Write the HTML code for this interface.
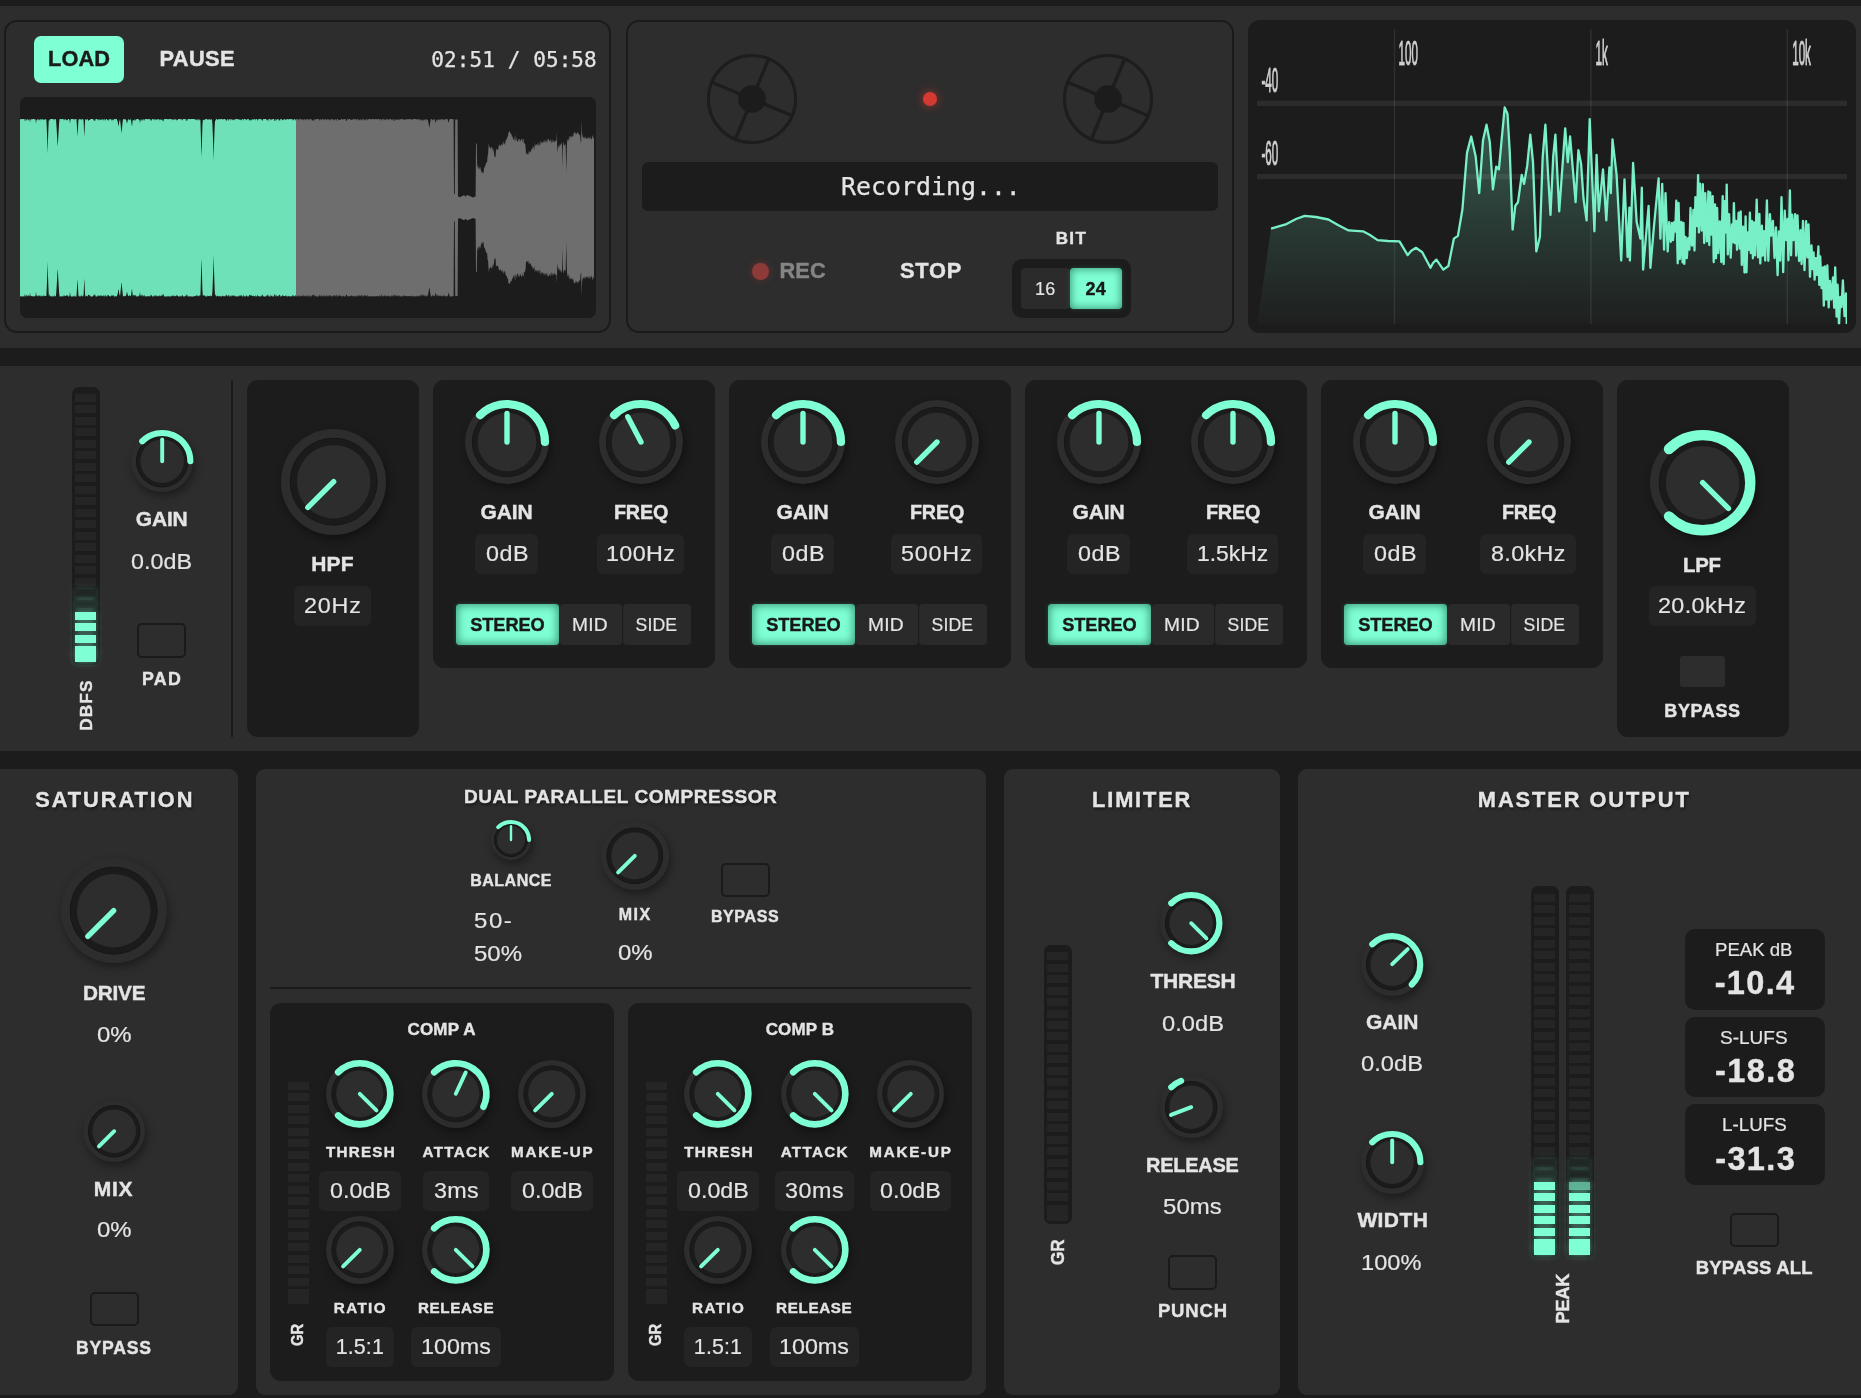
<!DOCTYPE html><html lang="en"><head><meta charset="utf-8"><title>Mastering Chain</title><style>html,body{margin:0;padding:0;background:#1c1c1c;}body{width:1861px;height:1398px;position:relative;overflow:hidden;font-family:"Liberation Sans",sans-serif;}#r div,#r svg{position:absolute;}#r{will-change:transform;position:absolute;left:0;top:0;width:1861px;height:1398px;overflow:hidden;}</style></head><body><div id="r">
<div style="left:0.0px;top:6.0px;width:1861.0px;height:342.0px;background:#2d2d2d;"></div>
<div style="left:0.0px;top:366.0px;width:1861.0px;height:385.0px;background:#2d2d2d;"></div>
<div style="left:4.4px;top:20.2px;width:607.0px;height:313.0px;border-radius:13px;border:2px solid #1b1b1b;box-sizing:border-box;"></div>
<div style="left:626.2px;top:20.2px;width:607.6px;height:313.0px;border-radius:13px;border:2px solid #1b1b1b;box-sizing:border-box;"></div>
<div style="left:34.0px;top:36.0px;width:90.0px;height:47.0px;background:#7fffd4;border-radius:7px;"></div>
<div style="left:48.10px;top:48.10px;font:700 21.8px/21.8px 'Liberation Sans', sans-serif;color:#1a1a1a;letter-spacing:0.025px;white-space:pre;-webkit-text-stroke:0.4px #1a1a1a;">LOAD</div>
<div style="left:159.40px;top:48.10px;font:700 21.8px/21.8px 'Liberation Sans', sans-serif;color:#e4e4e4;letter-spacing:0.425px;white-space:pre;-webkit-text-stroke:0.4px #e4e4e4;">PAUSE</div>
<div style="left:431.23px;top:49.80px;font:400 21px/21px 'DejaVu Sans Mono', 'Liberation Mono', monospace;color:#e4e4e4;letter-spacing:0.098px;white-space:pre;-webkit-text-stroke:.25px #e4e4e4;">02:51 / 05:58</div>
<div style="left:19.8px;top:97.0px;width:576.4px;height:220.5px;background:#1c1c1c;border-radius:7px;"></div>
<svg style="left:0;top:90px" width="620" height="240" viewBox="0 90 620 240"><path d="M20.0 119.0L20.4 118.9L20.8 119.5L21.2 118.9L21.6 119.2L22.0 119.0L22.4 118.9L22.8 119.2L23.2 118.9L23.6 119.1L24.0 118.9L24.4 118.9L24.8 120.9L25.2 120.9L25.6 118.9L26.0 118.9L26.4 119.4L26.8 120.8L27.2 119.3L27.6 119.0L28.0 120.9L28.4 118.9L28.8 120.3L29.2 119.0L29.6 119.5L30.0 122.7L30.4 119.5L30.8 120.1L31.2 118.9L31.6 119.3L32.0 119.5L32.4 119.0L32.8 119.3L33.2 118.9L33.6 118.9L34.0 118.9L34.4 119.6L34.8 119.1L35.2 119.0L35.6 120.2L36.0 123.7L36.4 120.2L36.8 120.0L37.2 119.7L37.6 118.9L38.0 119.3L38.4 119.2L38.8 120.4L39.2 119.8L39.6 119.0L40.0 121.0L40.4 118.9L40.8 119.1L41.2 119.9L41.6 118.9L42.0 119.2L42.4 118.9L42.8 119.6L43.2 119.9L43.6 119.3L44.0 120.4L44.4 119.0L44.8 119.6L45.2 119.4L45.6 119.3L46.0 119.1L46.4 120.2L46.8 128.6L47.2 139.3L47.6 153.8L48.0 139.3L48.4 128.6L48.8 119.5L49.2 121.1L49.6 120.1L50.0 119.0L50.4 119.0L50.8 119.6L51.2 118.9L51.6 119.1L52.0 118.9L52.4 118.9L52.8 118.9L53.2 119.9L53.6 118.9L54.0 118.9L54.4 119.0L54.8 120.4L55.2 118.9L55.6 119.1L56.0 119.3L56.4 124.9L56.8 131.2L57.2 138.2L57.6 146.6L58.0 142.1L58.4 134.6L58.8 128.0L59.2 121.8L59.6 118.9L60.0 118.9L60.4 118.9L60.8 118.9L61.2 119.2L61.6 119.3L62.0 118.9L62.4 118.9L62.8 119.1L63.2 119.0L63.6 119.3L64.0 120.8L64.4 119.6L64.8 119.2L65.2 119.4L65.6 119.6L66.0 118.9L66.4 120.5L66.8 119.9L67.2 120.4L67.6 120.0L68.0 119.0L68.4 119.0L68.8 118.9L69.2 119.5L69.6 120.2L70.0 123.7L70.4 120.2L70.8 118.9L71.2 119.0L71.6 118.9L72.0 118.9L72.4 118.9L72.8 118.9L73.2 119.0L73.6 118.9L74.0 120.4L74.4 119.4L74.8 118.9L75.2 118.9L75.6 119.0L76.0 119.0L76.4 118.9L76.8 124.0L77.2 131.5L77.6 136.1L78.0 127.6L78.4 120.5L78.8 118.9L79.2 119.0L79.6 118.9L80.0 120.2L80.4 118.9L80.8 118.9L81.2 120.8L81.6 119.2L82.0 118.9L82.4 119.3L82.8 118.9L83.2 119.2L83.6 121.1L84.0 130.9L84.4 136.8L84.8 125.8L85.2 119.0L85.6 118.9L86.0 119.9L86.4 119.2L86.8 119.9L87.2 119.0L87.6 118.9L88.0 120.1L88.4 121.0L88.8 120.3L89.2 120.1L89.6 120.1L90.0 119.8L90.4 118.9L90.8 119.2L91.2 119.0L91.6 118.9L92.0 118.9L92.4 118.9L92.8 118.9L93.2 119.6L93.6 120.8L94.0 119.1L94.4 120.7L94.8 121.0L95.2 120.8L95.6 119.0L96.0 118.9L96.4 118.9L96.8 118.9L97.2 118.9L97.6 119.4L98.0 120.5L98.4 120.2L98.8 119.1L99.2 119.5L99.6 120.0L100.0 118.9L100.4 119.5L100.8 120.6L101.2 120.0L101.6 119.8L102.0 119.1L102.4 118.9L102.8 120.0L103.2 119.0L103.6 120.0L104.0 120.9L104.4 119.0L104.8 119.0L105.2 120.8L105.6 119.7L106.0 118.9L106.4 118.9L106.8 118.9L107.2 120.5L107.6 120.1L108.0 118.9L108.4 120.1L108.8 121.0L109.2 119.5L109.6 119.0L110.0 119.3L110.4 118.9L110.8 118.9L111.2 120.9L111.6 119.5L112.0 119.2L112.4 120.7L112.8 119.1L113.2 120.4L113.6 120.1L114.0 118.9L114.4 118.9L114.8 119.0L115.2 118.9L115.6 119.3L116.0 118.9L116.4 119.1L116.8 118.9L117.2 120.6L117.6 120.7L118.0 123.3L118.4 126.5L118.8 124.8L119.2 122.0L119.6 120.6L120.0 119.2L120.4 122.4L120.8 126.2L121.2 130.6L121.6 133.2L122.0 128.3L122.4 124.3L122.8 120.6L123.2 118.9L123.6 119.1L124.0 119.7L124.4 119.3L124.8 119.0L125.2 119.2L125.6 119.3L126.0 120.0L126.4 120.8L126.8 123.1L127.2 123.1L127.6 120.8L128.0 119.9L128.4 119.2L128.8 119.3L129.2 119.9L129.6 120.6L130.0 119.1L130.4 119.4L130.8 119.2L131.2 121.2L131.6 124.5L132.0 126.6L132.4 122.8L132.8 119.6L133.2 120.7L133.6 119.7L134.0 120.4L134.4 120.7L134.8 118.9L135.2 119.3L135.6 120.7L136.0 120.2L136.4 118.9L136.8 118.9L137.2 119.1L137.6 118.9L138.0 118.9L138.4 118.9L138.8 119.6L139.2 120.0L139.6 120.5L140.0 123.7L140.4 120.2L140.8 119.5L141.2 118.9L141.6 120.4L142.0 120.9L142.4 118.9L142.8 120.8L143.2 119.0L143.6 119.2L144.0 121.0L144.4 120.2L144.8 118.9L145.2 119.1L145.6 119.2L146.0 119.0L146.4 118.9L146.8 119.0L147.2 119.7L147.6 118.9L148.0 119.3L148.4 119.1L148.8 118.9L149.2 119.0L149.6 119.4L150.0 119.2L150.4 118.9L150.8 121.0L151.2 120.0L151.6 120.9L152.0 118.9L152.4 118.9L152.8 118.9L153.2 119.9L153.6 118.9L154.0 118.9L154.4 119.1L154.8 120.6L155.2 120.1L155.6 118.9L156.0 118.9L156.4 120.6L156.8 119.3L157.2 119.7L157.6 118.9L158.0 118.9L158.4 119.6L158.8 119.1L159.2 118.9L159.6 120.7L160.0 119.5L160.4 120.0L160.8 118.9L161.2 120.3L161.6 118.9L162.0 120.3L162.4 119.3L162.8 121.3L163.2 121.3L163.6 120.7L164.0 118.9L164.4 118.9L164.8 119.2L165.2 118.9L165.6 118.9L166.0 118.9L166.4 118.9L166.8 118.9L167.2 119.0L167.6 119.0L168.0 119.9L168.4 119.0L168.8 119.2L169.2 118.9L169.6 119.0L170.0 118.9L170.4 118.9L170.8 118.9L171.2 119.8L171.6 119.3L172.0 118.9L172.4 119.1L172.8 120.7L173.2 118.9L173.6 120.1L174.0 119.1L174.4 119.2L174.8 120.2L175.2 119.0L175.6 119.2L176.0 119.6L176.4 121.0L176.8 119.0L177.2 120.2L177.6 119.7L178.0 119.5L178.4 119.0L178.8 119.0L179.2 118.9L179.6 118.9L180.0 118.9L180.4 119.8L180.8 118.9L181.2 118.9L181.6 118.9L182.0 120.2L182.4 120.4L182.8 119.6L183.2 118.9L183.6 118.9L184.0 119.0L184.4 119.1L184.8 118.9L185.2 119.1L185.6 118.9L186.0 120.9L186.4 120.9L186.8 119.3L187.2 118.9L187.6 120.9L188.0 119.0L188.4 119.0L188.8 118.9L189.2 119.0L189.6 119.1L190.0 119.2L190.4 118.9L190.8 119.2L191.2 118.9L191.6 118.9L192.0 118.9L192.4 119.0L192.8 118.9L193.2 118.9L193.6 119.0L194.0 118.9L194.4 119.3L194.8 119.2L195.2 119.8L195.6 119.5L196.0 119.7L196.4 120.4L196.8 119.0L197.2 119.0L197.6 121.0L198.0 118.9L198.4 119.7L198.8 119.5L199.2 118.9L199.6 120.2L200.0 120.5L200.4 119.4L200.8 132.4L201.2 147.7L201.6 157.0L202.0 139.8L202.4 125.5L202.8 120.2L203.2 120.0L203.6 120.1L204.0 119.3L204.4 120.5L204.8 119.6L205.2 119.6L205.6 118.9L206.0 118.9L206.4 118.9L206.8 119.0L207.2 118.9L207.6 120.2L208.0 119.3L208.4 119.4L208.8 119.4L209.2 119.6L209.6 119.2L210.0 118.9L210.4 120.0L210.8 119.8L211.2 119.2L211.6 119.2L212.0 119.5L212.4 123.7L212.8 133.8L213.2 145.1L213.6 160.3L214.0 145.1L214.4 133.8L214.8 123.7L215.2 119.8L215.6 120.9L216.0 119.2L216.4 119.0L216.8 119.1L217.2 119.6L217.6 119.9L218.0 119.4L218.4 119.5L218.8 118.9L219.2 118.9L219.6 118.9L220.0 119.8L220.4 119.0L220.8 119.3L221.2 118.9L221.6 118.9L222.0 118.9L222.4 119.6L222.8 119.6L223.2 119.6L223.6 119.0L224.0 119.2L224.4 119.1L224.8 119.1L225.2 118.9L225.6 120.5L226.0 118.9L226.4 121.0L226.8 120.7L227.2 118.9L227.6 119.1L228.0 120.1L228.4 120.9L228.8 119.1L229.2 118.9L229.6 118.9L230.0 120.8L230.4 118.9L230.8 119.3L231.2 118.9L231.6 119.2L232.0 120.8L232.4 118.9L232.8 120.1L233.2 119.2L233.6 120.4L234.0 119.7L234.4 118.9L234.8 120.5L235.2 119.2L235.6 118.9L236.0 118.9L236.4 119.2L236.8 119.1L237.2 119.0L237.6 118.9L238.0 119.0L238.4 119.0L238.8 120.2L239.2 118.9L239.6 119.8L240.0 120.2L240.4 118.9L240.8 120.6L241.2 119.7L241.6 120.5L242.0 119.0L242.4 119.0L242.8 119.0L243.2 121.1L243.6 119.3L244.0 119.0L244.4 119.1L244.8 118.9L245.2 118.9L245.6 118.9L246.0 120.2L246.4 119.0L246.8 120.7L247.2 118.9L247.6 118.9L248.0 119.2L248.4 118.9L248.8 119.0L249.2 120.8L249.6 120.4L250.0 120.1L250.4 119.5L250.8 120.6L251.2 120.7L251.6 119.3L252.0 119.7L252.4 118.9L252.8 119.8L253.2 119.1L253.6 119.8L254.0 119.5L254.4 119.0L254.8 118.9L255.2 120.7L255.6 118.9L256.0 119.1L256.4 119.0L256.8 119.0L257.2 119.8L257.6 120.9L258.0 118.9L258.4 119.5L258.8 119.0L259.2 119.3L259.6 119.0L260.0 118.9L260.4 118.9L260.8 118.9L261.2 120.5L261.6 119.2L262.0 118.9L262.4 120.5L262.8 121.1L263.2 119.1L263.6 118.9L264.0 118.9L264.4 118.9L264.8 119.0L265.2 118.9L265.6 118.9L266.0 118.9L266.4 119.3L266.8 120.4L267.2 119.8L267.6 119.7L268.0 121.7L268.4 119.7L268.8 119.0L269.2 119.0L269.6 118.9L270.0 118.9L270.4 120.9L270.8 118.9L271.2 119.2L271.6 119.4L272.0 120.3L272.4 118.9L272.8 118.9L273.2 118.9L273.6 119.0L274.0 119.1L274.4 120.8L274.8 121.1L275.2 121.1L275.6 118.9L276.0 118.9L276.4 119.7L276.8 120.5L277.2 119.1L277.6 119.3L278.0 118.9L278.4 119.0L278.8 120.7L279.2 120.1L279.6 120.3L280.0 120.9L280.4 118.9L280.8 118.9L281.2 118.9L281.6 119.2L282.0 119.6L282.4 120.7L282.8 119.7L283.2 119.5L283.6 119.9L284.0 119.1L284.4 119.3L284.8 118.9L285.2 120.0L285.6 118.9L286.0 120.6L286.4 119.5L286.8 119.0L287.2 118.9L287.6 118.9L288.0 119.5L288.4 119.7L288.8 118.9L289.2 118.9L289.6 119.2L290.0 119.3L290.4 119.0L290.8 118.9L291.2 119.4L291.6 118.9L292.0 119.0L292.4 119.1L292.8 120.8L293.2 119.5L293.6 120.4L294.0 119.1L294.4 118.9L294.8 118.9L295.2 120.9L295.6 119.7L296.0 119.0L296.0 296.4L295.6 295.7L295.2 294.5L294.8 296.5L294.4 296.5L294.0 296.3L293.6 295.0L293.2 295.9L292.8 294.6L292.4 296.3L292.0 296.4L291.6 296.5L291.2 296.0L290.8 296.5L290.4 296.4L290.0 296.1L289.6 296.2L289.2 296.5L288.8 296.5L288.4 295.7L288.0 295.9L287.6 296.5L287.2 296.5L286.8 296.4L286.4 295.9L286.0 294.8L285.6 296.5L285.2 295.4L284.8 296.5L284.4 296.1L284.0 296.3L283.6 295.5L283.2 295.9L282.8 295.7L282.4 294.7L282.0 295.8L281.6 296.2L281.2 296.5L280.8 296.5L280.4 296.5L280.0 294.5L279.6 295.1L279.2 295.3L278.8 294.7L278.4 296.4L278.0 296.5L277.6 296.1L277.2 296.3L276.8 294.9L276.4 295.7L276.0 296.5L275.6 296.5L275.2 294.3L274.8 294.3L274.4 294.6L274.0 296.3L273.6 296.4L273.2 296.5L272.8 296.5L272.4 296.5L272.0 295.1L271.6 296.0L271.2 296.2L270.8 296.5L270.4 294.5L270.0 296.5L269.6 296.5L269.2 296.4L268.8 296.4L268.4 295.7L268.0 293.7L267.6 295.7L267.2 295.6L266.8 295.0L266.4 296.1L266.0 296.5L265.6 296.5L265.2 296.5L264.8 296.4L264.4 296.5L264.0 296.5L263.6 296.5L263.2 296.3L262.8 294.3L262.4 294.9L262.0 296.5L261.6 296.2L261.2 294.9L260.8 296.5L260.4 296.5L260.0 296.5L259.6 296.4L259.2 296.1L258.8 296.4L258.4 295.9L258.0 296.5L257.6 294.5L257.2 295.6L256.8 296.4L256.4 296.4L256.0 296.3L255.6 296.5L255.2 294.7L254.8 296.5L254.4 296.4L254.0 295.9L253.6 295.6L253.2 296.3L252.8 295.6L252.4 296.5L252.0 295.7L251.6 296.1L251.2 294.7L250.8 294.8L250.4 295.9L250.0 295.3L249.6 295.0L249.2 294.6L248.8 296.4L248.4 296.5L248.0 296.2L247.6 296.5L247.2 296.5L246.8 294.7L246.4 296.4L246.0 295.2L245.6 296.5L245.2 296.5L244.8 296.5L244.4 296.3L244.0 296.4L243.6 296.1L243.2 294.3L242.8 296.4L242.4 296.4L242.0 296.4L241.6 294.9L241.2 295.7L240.8 294.8L240.4 296.5L240.0 295.2L239.6 295.6L239.2 296.5L238.8 295.2L238.4 296.4L238.0 296.4L237.6 296.5L237.2 296.4L236.8 296.3L236.4 296.2L236.0 296.5L235.6 296.5L235.2 296.2L234.8 294.9L234.4 296.5L234.0 295.7L233.6 295.0L233.2 296.2L232.8 295.3L232.4 296.5L232.0 294.6L231.6 296.2L231.2 296.5L230.8 296.1L230.4 296.5L230.0 294.6L229.6 296.5L229.2 296.5L228.8 296.3L228.4 294.5L228.0 295.3L227.6 296.3L227.2 296.5L226.8 294.7L226.4 294.4L226.0 296.5L225.6 294.9L225.2 296.5L224.8 296.3L224.4 296.3L224.0 296.2L223.6 296.4L223.2 295.8L222.8 295.8L222.4 295.8L222.0 296.5L221.6 296.5L221.2 296.5L220.8 296.1L220.4 296.4L220.0 295.6L219.6 296.5L219.2 296.5L218.8 296.5L218.4 295.9L218.0 296.0L217.6 295.5L217.2 295.8L216.8 296.3L216.4 296.4L216.0 296.2L215.6 294.5L215.2 295.6L214.8 291.7L214.4 281.6L214.0 270.3L213.6 255.1L213.2 270.3L212.8 281.6L212.4 291.7L212.0 295.9L211.6 296.2L211.2 296.2L210.8 295.6L210.4 295.4L210.0 296.5L209.6 296.2L209.2 295.8L208.8 296.0L208.4 296.0L208.0 296.1L207.6 295.2L207.2 296.5L206.8 296.4L206.4 296.5L206.0 296.5L205.6 296.5L205.2 295.8L204.8 295.8L204.4 294.9L204.0 296.1L203.6 295.3L203.2 295.4L202.8 295.2L202.4 289.9L202.0 275.6L201.6 258.4L201.2 267.7L200.8 283.0L200.4 296.0L200.0 294.9L199.6 295.2L199.2 296.5L198.8 295.9L198.4 295.7L198.0 296.5L197.6 294.4L197.2 296.4L196.8 296.4L196.4 295.0L196.0 295.7L195.6 295.9L195.2 295.6L194.8 296.2L194.4 296.1L194.0 296.5L193.6 296.4L193.2 296.5L192.8 296.5L192.4 296.4L192.0 296.5L191.6 296.5L191.2 296.5L190.8 296.2L190.4 296.5L190.0 296.2L189.6 296.3L189.2 296.4L188.8 296.5L188.4 296.4L188.0 296.4L187.6 294.5L187.2 296.5L186.8 296.1L186.4 294.5L186.0 294.5L185.6 296.5L185.2 296.3L184.8 296.5L184.4 296.3L184.0 296.4L183.6 296.5L183.2 296.5L182.8 295.8L182.4 295.0L182.0 295.2L181.6 296.5L181.2 296.5L180.8 296.5L180.4 295.6L180.0 296.5L179.6 296.5L179.2 296.5L178.8 296.4L178.4 296.4L178.0 295.9L177.6 295.7L177.2 295.2L176.8 296.4L176.4 294.4L176.0 295.8L175.6 296.2L175.2 296.4L174.8 295.2L174.4 296.2L174.0 296.3L173.6 295.3L173.2 296.5L172.8 294.7L172.4 296.3L172.0 296.5L171.6 296.1L171.2 295.6L170.8 296.5L170.4 296.5L170.0 296.5L169.6 296.4L169.2 296.5L168.8 296.2L168.4 296.4L168.0 295.5L167.6 296.4L167.2 296.4L166.8 296.5L166.4 296.5L166.0 296.5L165.6 296.5L165.2 296.5L164.8 296.2L164.4 296.5L164.0 296.5L163.6 294.7L163.2 294.1L162.8 294.1L162.4 296.1L162.0 295.1L161.6 296.5L161.2 295.1L160.8 296.5L160.4 295.4L160.0 295.9L159.6 294.7L159.2 296.5L158.8 296.3L158.4 295.8L158.0 296.5L157.6 296.5L157.2 295.7L156.8 296.1L156.4 294.8L156.0 296.5L155.6 296.5L155.2 295.3L154.8 294.8L154.4 296.3L154.0 296.5L153.6 296.5L153.2 295.5L152.8 296.5L152.4 296.5L152.0 296.5L151.6 294.5L151.2 295.4L150.8 294.4L150.4 296.5L150.0 296.2L149.6 296.0L149.2 296.4L148.8 296.5L148.4 296.3L148.0 296.1L147.6 296.5L147.2 295.7L146.8 296.4L146.4 296.5L146.0 296.4L145.6 296.2L145.2 296.3L144.8 296.5L144.4 295.2L144.0 294.4L143.6 296.2L143.2 296.4L142.8 294.6L142.4 296.5L142.0 294.5L141.6 295.0L141.2 296.5L140.8 295.9L140.4 295.2L140.0 291.7L139.6 294.9L139.2 295.4L138.8 295.8L138.4 296.5L138.0 296.5L137.6 296.5L137.2 296.3L136.8 296.5L136.4 296.5L136.0 295.2L135.6 294.7L135.2 296.1L134.8 296.5L134.4 294.7L134.0 295.0L133.6 295.7L133.2 294.7L132.8 295.8L132.4 292.6L132.0 288.8L131.6 290.9L131.2 294.2L130.8 296.2L130.4 296.0L130.0 296.3L129.6 294.8L129.2 295.5L128.8 296.1L128.4 296.2L128.0 295.5L127.6 294.6L127.2 292.3L126.8 292.3L126.4 294.6L126.0 295.4L125.6 296.1L125.2 296.2L124.8 296.4L124.4 296.1L124.0 295.7L123.6 296.3L123.2 296.5L122.8 294.8L122.4 291.1L122.0 287.1L121.6 282.2L121.2 284.8L120.8 289.2L120.4 293.0L120.0 296.2L119.6 294.8L119.2 293.4L118.8 290.6L118.4 288.9L118.0 292.1L117.6 294.7L117.2 294.8L116.8 296.5L116.4 296.3L116.0 296.5L115.6 296.1L115.2 296.5L114.8 296.4L114.4 296.5L114.0 296.5L113.6 295.3L113.2 295.0L112.8 296.3L112.4 294.7L112.0 296.2L111.6 295.9L111.2 294.5L110.8 296.5L110.4 296.5L110.0 296.1L109.6 296.4L109.2 295.9L108.8 294.4L108.4 295.3L108.0 296.5L107.6 295.3L107.2 294.9L106.8 296.5L106.4 296.5L106.0 296.5L105.6 295.7L105.2 294.6L104.8 296.4L104.4 296.4L104.0 294.5L103.6 295.4L103.2 296.4L102.8 295.4L102.4 296.5L102.0 296.3L101.6 295.6L101.2 295.4L100.8 294.8L100.4 295.9L100.0 296.5L99.6 295.4L99.2 295.9L98.8 296.3L98.4 295.2L98.0 294.9L97.6 296.0L97.2 296.5L96.8 296.5L96.4 296.5L96.0 296.5L95.6 296.4L95.2 294.6L94.8 294.4L94.4 294.7L94.0 296.3L93.6 294.6L93.2 295.8L92.8 296.5L92.4 296.5L92.0 296.5L91.6 296.5L91.2 296.4L90.8 296.2L90.4 296.5L90.0 295.6L89.6 295.3L89.2 295.3L88.8 295.1L88.4 294.4L88.0 295.3L87.6 296.5L87.2 296.4L86.8 295.5L86.4 296.2L86.0 295.5L85.6 296.5L85.2 296.4L84.8 289.6L84.4 278.6L84.0 284.5L83.6 294.3L83.2 296.2L82.8 296.5L82.4 296.1L82.0 296.5L81.6 296.2L81.2 294.6L80.8 296.5L80.4 296.5L80.0 295.2L79.6 296.5L79.2 296.4L78.8 296.5L78.4 294.9L78.0 287.8L77.6 279.3L77.2 283.9L76.8 291.4L76.4 296.5L76.0 296.4L75.6 296.4L75.2 296.5L74.8 296.5L74.4 296.0L74.0 295.0L73.6 296.5L73.2 296.4L72.8 296.5L72.4 296.5L72.0 296.5L71.6 296.5L71.2 296.4L70.8 296.5L70.4 295.2L70.0 291.7L69.6 295.2L69.2 295.9L68.8 296.5L68.4 296.4L68.0 296.4L67.6 295.4L67.2 295.0L66.8 295.5L66.4 294.9L66.0 296.5L65.6 295.8L65.2 296.0L64.8 296.2L64.4 295.8L64.0 294.6L63.6 296.1L63.2 296.4L62.8 296.3L62.4 296.5L62.0 296.5L61.6 296.1L61.2 296.2L60.8 296.5L60.4 296.5L60.0 296.5L59.6 296.5L59.2 293.6L58.8 287.4L58.4 280.8L58.0 273.3L57.6 268.8L57.2 277.2L56.8 284.2L56.4 290.5L56.0 296.1L55.6 296.3L55.2 296.5L54.8 295.0L54.4 296.4L54.0 296.5L53.6 296.5L53.2 295.5L52.8 296.5L52.4 296.5L52.0 296.5L51.6 296.3L51.2 296.5L50.8 295.8L50.4 296.4L50.0 296.4L49.6 295.3L49.2 294.3L48.8 295.9L48.4 286.8L48.0 276.1L47.6 261.6L47.2 276.1L46.8 286.8L46.4 295.2L46.0 296.3L45.6 296.1L45.2 296.0L44.8 295.8L44.4 296.4L44.0 295.0L43.6 296.1L43.2 295.5L42.8 295.8L42.4 296.5L42.0 296.2L41.6 296.5L41.2 295.5L40.8 296.3L40.4 296.5L40.0 294.4L39.6 296.4L39.2 295.6L38.8 295.0L38.4 296.2L38.0 296.1L37.6 296.5L37.2 295.7L36.8 295.4L36.4 295.2L36.0 291.7L35.6 295.2L35.2 296.4L34.8 296.3L34.4 295.8L34.0 296.5L33.6 296.5L33.2 296.5L32.8 296.1L32.4 296.4L32.0 295.9L31.6 296.1L31.2 296.5L30.8 295.3L30.4 295.9L30.0 292.7L29.6 295.9L29.2 296.4L28.8 295.1L28.4 296.5L28.0 294.5L27.6 296.4L27.2 296.1L26.8 294.6L26.4 296.0L26.0 296.5L25.6 296.5L25.2 294.5L24.8 294.5L24.4 296.5L24.0 296.5L23.6 296.3L23.2 296.5L22.8 296.2L22.4 296.5L22.0 296.4L21.6 296.2L21.2 296.5L20.8 295.9L20.4 296.5L20.0 296.4Z" fill="#6fe1b9"/><path d="M296.0 119.0L296.4 118.9L296.8 119.2L297.2 119.6L297.6 119.1L298.0 118.9L298.4 119.6L298.8 120.6L299.2 118.9L299.6 118.9L300.0 119.0L300.4 119.1L300.8 119.6L301.2 118.9L301.6 120.0L302.0 119.8L302.4 119.2L302.8 118.9L303.2 120.9L303.6 119.0L304.0 120.1L304.4 118.9L304.8 118.9L305.2 119.9L305.6 119.0L306.0 120.8L306.4 119.2L306.8 118.9L307.2 118.9L307.6 119.1L308.0 119.5L308.4 120.8L308.8 118.9L309.2 119.0L309.6 118.9L310.0 120.9L310.4 118.9L310.8 118.9L311.2 118.9L311.6 119.0L312.0 120.5L312.4 120.4L312.8 119.8L313.2 121.1L313.6 120.7L314.0 119.0L314.4 118.9L314.8 120.7L315.2 119.8L315.6 118.9L316.0 119.5L316.4 119.0L316.8 119.0L317.2 119.0L317.6 118.9L318.0 118.9L318.4 118.9L318.8 119.0L319.2 120.8L319.6 118.9L320.0 120.9L320.4 118.9L320.8 119.0L321.2 120.1L321.6 120.1L322.0 119.1L322.4 118.9L322.8 119.1L323.2 119.0L323.6 120.6L324.0 118.9L324.4 119.0L324.8 120.5L325.2 118.9L325.6 119.1L326.0 120.1L326.4 119.9L326.8 118.9L327.2 118.9L327.6 118.9L328.0 120.6L328.4 118.9L328.8 119.8L329.2 120.5L329.6 119.0L330.0 118.9L330.4 120.8L330.8 119.4L331.2 118.9L331.6 119.7L332.0 119.0L332.4 118.9L332.8 118.9L333.2 119.8L333.6 120.6L334.0 119.5L334.4 120.7L334.8 118.9L335.2 118.9L335.6 119.1L336.0 120.8L336.4 120.8L336.8 119.0L337.2 118.9L337.6 119.1L338.0 119.2L338.4 120.7L338.8 118.9L339.2 120.0L339.6 119.8L340.0 120.1L340.4 119.9L340.8 119.4L341.2 119.0L341.6 119.0L342.0 119.0L342.4 120.0L342.8 118.9L343.2 118.9L343.6 119.8L344.0 118.9L344.4 118.9L344.8 118.9L345.2 119.3L345.6 119.0L346.0 121.0L346.4 120.4L346.8 121.0L347.2 118.9L347.6 118.9L348.0 118.9L348.4 119.2L348.8 119.7L349.2 119.1L349.6 118.9L350.0 119.1L350.4 119.4L350.8 119.6L351.2 119.8L351.6 120.2L352.0 119.5L352.4 118.9L352.8 120.2L353.2 119.0L353.6 119.3L354.0 119.0L354.4 119.8L354.8 118.9L355.2 118.9L355.6 118.9L356.0 118.9L356.4 120.4L356.8 119.3L357.2 119.0L357.6 119.0L358.0 121.1L358.4 119.2L358.8 118.9L359.2 120.1L359.6 119.5L360.0 121.0L360.4 118.9L360.8 119.1L361.2 120.1L361.6 120.2L362.0 120.6L362.4 118.9L362.8 119.0L363.2 118.9L363.6 118.9L364.0 120.9L364.4 119.3L364.8 120.7L365.2 119.0L365.6 120.3L366.0 119.1L366.4 118.9L366.8 119.9L367.2 120.8L367.6 118.9L368.0 119.4L368.4 119.4L368.8 118.9L369.2 119.0L369.6 118.9L370.0 118.9L370.4 118.9L370.8 119.4L371.2 119.5L371.6 118.9L372.0 118.9L372.4 119.0L372.8 119.6L373.2 118.9L373.6 119.0L374.0 118.9L374.4 120.0L374.8 119.3L375.2 118.9L375.6 118.9L376.0 119.0L376.4 119.3L376.8 119.5L377.2 118.9L377.6 118.9L378.0 119.6L378.4 119.1L378.8 119.0L379.2 119.0L379.6 120.8L380.0 119.0L380.4 119.3L380.8 119.0L381.2 119.1L381.6 120.3L382.0 121.1L382.4 119.0L382.8 118.9L383.2 119.7L383.6 118.9L384.0 118.9L384.4 120.5L384.8 119.1L385.2 120.1L385.6 119.0L386.0 120.4L386.4 119.1L386.8 118.9L387.2 118.9L387.6 119.3L388.0 119.5L388.4 120.6L388.8 118.9L389.2 119.4L389.6 119.0L390.0 119.2L390.4 118.9L390.8 119.0L391.2 119.2L391.6 120.6L392.0 118.9L392.4 119.2L392.8 120.0L393.2 120.9L393.6 118.9L394.0 118.9L394.4 120.7L394.8 120.9L395.2 119.1L395.6 118.9L396.0 120.6L396.4 119.0L396.8 120.5L397.2 119.4L397.6 120.1L398.0 118.9L398.4 120.0L398.8 118.9L399.2 119.0L399.6 120.2L400.0 120.2L400.4 118.9L400.8 118.9L401.2 119.0L401.6 119.2L402.0 119.0L402.4 118.9L402.8 118.9L403.2 119.7L403.6 120.5L404.0 118.9L404.4 119.3L404.8 119.9L405.2 118.9L405.6 120.2L406.0 118.9L406.4 119.4L406.8 119.3L407.2 119.4L407.6 119.0L408.0 119.1L408.4 119.3L408.8 119.1L409.2 119.5L409.6 119.1L410.0 119.1L410.4 118.9L410.8 119.4L411.2 119.2L411.6 118.9L412.0 119.9L412.4 119.9L412.8 119.1L413.2 118.9L413.6 119.1L414.0 118.9L414.4 118.9L414.8 119.1L415.2 118.9L415.6 119.1L416.0 119.2L416.4 118.9L416.8 119.5L417.2 118.9L417.6 119.8L418.0 119.9L418.4 119.2L418.8 118.9L419.2 119.2L419.6 119.0L420.0 120.8L420.4 118.9L420.8 120.3L421.2 121.1L421.6 119.8L422.0 120.1L422.4 118.9L422.8 121.0L423.2 119.2L423.6 120.8L424.0 120.6L424.4 118.9L424.8 120.0L425.2 120.7L425.6 118.9L426.0 119.0L426.4 119.9L426.8 118.9L427.2 120.5L427.6 118.9L428.0 120.4L428.4 122.6L428.8 125.0L429.2 127.8L429.6 126.3L430.0 123.7L430.4 121.5L430.8 119.4L431.2 118.9L431.6 118.9L432.0 118.9L432.4 120.7L432.8 119.6L433.2 120.5L433.6 118.9L434.0 120.0L434.4 118.9L434.8 119.3L435.2 120.9L435.6 122.9L436.0 121.9L436.4 120.1L436.8 119.3L437.2 120.4L437.6 118.9L438.0 121.1L438.4 119.4L438.8 119.0L439.2 120.0L439.6 118.9L440.0 121.0L440.4 119.3L440.8 119.0L441.2 119.9L441.6 119.1L442.0 118.9L442.4 119.8L442.8 118.9L443.2 120.1L443.6 118.9L444.0 119.5L444.4 121.0L444.8 119.3L445.2 119.5L445.6 119.0L446.0 118.9L446.4 118.9L446.8 118.9L447.2 119.4L447.6 119.1L448.0 120.5L448.4 122.4L448.8 122.4L449.2 120.5L449.6 119.5L450.0 118.9L450.4 118.9L450.8 119.0L451.2 118.9L451.6 119.0L452.0 118.9L452.4 119.3L452.8 119.3L453.2 118.9L453.6 119.4L454.0 194.0L454.4 194.0L454.8 194.0L455.2 119.4L455.6 119.4L456.0 119.4L456.4 119.4L456.8 119.4L457.2 119.4L457.6 119.4L458.0 196.5L458.4 196.6L458.8 196.8L459.2 196.9L459.6 197.1L460.0 197.2L460.4 197.0L460.8 196.8L461.2 196.6L461.6 196.4L462.0 196.1L462.4 195.9L462.8 195.7L463.2 195.5L463.6 195.3L464.0 195.1L464.4 195.4L464.8 195.7L465.2 196.1L465.6 196.4L466.0 196.7L466.4 196.0L466.8 195.3L467.2 195.0L467.6 195.1L468.0 195.3L468.4 195.5L468.8 195.6L469.2 195.8L469.6 195.9L470.0 196.1L470.4 196.3L470.8 196.5L471.2 196.7L471.6 196.8L472.0 197.0L472.4 197.2L472.8 197.4L473.2 197.4L473.6 197.2L474.0 197.1L474.4 196.9L474.8 196.7L475.2 196.5L475.6 196.3L476.0 143.4L476.4 143.4L476.8 143.4L477.2 166.5L477.6 167.8L478.0 164.1L478.4 168.0L478.8 168.9L479.2 169.6L479.6 167.4L480.0 166.7L480.4 167.6L480.8 170.0L481.2 171.3L481.6 173.3L482.0 170.8L482.4 172.0L482.8 173.8L483.2 173.1L483.6 172.7L484.0 168.1L484.4 167.1L484.8 168.1L485.2 163.6L485.6 166.8L486.0 163.1L486.4 162.6L486.8 162.3L487.2 162.0L487.6 155.3L488.0 155.3L488.4 148.8L488.8 143.1L489.2 146.0L489.6 147.4L490.0 147.1L490.4 149.2L490.8 148.2L491.2 146.3L491.6 148.4L492.0 146.7L492.4 148.3L492.8 151.2L493.2 148.6L493.6 150.8L494.0 152.7L494.4 157.9L494.8 155.3L495.2 157.5L495.6 156.4L496.0 148.5L496.4 149.3L496.8 149.9L497.2 150.0L497.6 149.1L498.0 149.8L498.4 148.0L498.8 145.6L499.2 145.6L499.6 144.6L500.0 144.9L500.4 146.9L500.8 145.1L501.2 145.4L501.6 143.4L502.0 144.4L502.4 145.4L502.8 143.2L503.2 141.3L503.6 144.7L504.0 141.2L504.4 145.2L504.8 143.7L505.2 143.6L505.6 140.8L506.0 139.5L506.4 139.2L506.8 140.1L507.2 136.1L507.6 137.6L508.0 136.8L508.4 132.2L508.8 132.4L509.2 131.3L509.6 132.1L510.0 131.1L510.4 134.3L510.8 133.1L511.2 134.4L511.6 134.2L512.0 136.9L512.4 136.1L512.8 137.5L513.2 139.5L513.6 140.0L514.0 138.0L514.4 140.8L514.8 136.6L515.2 134.7L515.6 141.1L516.0 140.9L516.4 136.9L516.8 139.9L517.2 141.1L517.6 141.8L518.0 141.9L518.4 138.7L518.8 139.2L519.2 139.0L519.6 138.9L520.0 142.4L520.4 139.9L520.8 141.1L521.2 139.0L521.6 139.1L522.0 138.9L522.4 143.1L522.8 139.2L523.2 139.1L523.6 139.1L524.0 143.4L524.4 143.0L524.8 143.6L525.2 144.1L525.6 146.9L526.0 153.9L526.4 154.3L526.8 152.8L527.2 153.2L527.6 154.3L528.0 154.7L528.4 154.3L528.8 150.6L529.2 153.0L529.6 152.0L530.0 151.1L530.4 152.7L530.8 151.1L531.2 150.6L531.6 148.0L532.0 149.4L532.4 149.2L532.8 145.8L533.2 148.0L533.6 146.2L534.0 147.2L534.4 150.0L534.8 142.1L535.2 145.9L535.6 144.0L536.0 145.9L536.4 143.9L536.8 144.4L537.2 145.8L537.6 142.4L538.0 146.0L538.4 142.1L538.8 145.1L539.2 145.8L539.6 144.7L540.0 141.7L540.4 140.5L540.8 145.2L541.2 142.7L541.6 142.5L542.0 140.9L542.4 143.8L542.8 142.1L543.2 142.7L543.6 140.1L544.0 142.9L544.4 139.3L544.8 142.5L545.2 142.7L545.6 140.1L546.0 141.0L546.4 142.8L546.8 140.0L547.2 142.7L547.6 139.0L548.0 139.3L548.4 138.7L548.8 139.5L549.2 141.0L549.6 140.8L550.0 141.0L550.4 138.6L550.8 142.7L551.2 138.8L551.6 143.2L552.0 142.4L552.4 142.2L552.8 139.1L553.2 141.2L553.6 141.9L554.0 139.5L554.4 142.8L554.8 141.8L555.2 141.5L555.6 140.5L556.0 140.5L556.4 141.0L556.8 131.7L557.2 146.4L557.6 152.7L558.0 147.8L558.4 147.2L558.8 145.3L559.2 147.2L559.6 145.5L560.0 143.5L560.4 144.2L560.8 146.1L561.2 144.1L561.6 141.8L562.0 145.0L562.4 167.2L562.8 149.1L563.2 142.7L563.6 142.0L564.0 145.4L564.4 145.4L564.8 145.0L565.2 144.6L565.6 143.6L566.0 159.1L566.4 172.8L566.8 149.3L567.2 138.9L567.6 139.5L568.0 142.0L568.4 137.2L568.8 141.1L569.2 139.2L569.6 135.8L570.0 136.3L570.4 136.2L570.8 137.2L571.2 138.0L571.6 135.3L572.0 137.5L572.4 136.6L572.8 135.2L573.2 136.6L573.6 134.3L574.0 131.9L574.4 131.9L574.8 133.0L575.2 132.5L575.6 133.4L576.0 135.1L576.4 133.0L576.8 134.1L577.2 132.5L577.6 131.8L578.0 134.3L578.4 133.7L578.8 132.9L579.2 134.7L579.6 135.7L580.0 133.4L580.4 138.7L580.8 142.3L581.2 142.7L581.6 119.8L582.0 132.0L582.4 135.3L582.8 136.7L583.2 137.8L583.6 136.6L584.0 139.7L584.4 138.2L584.8 136.4L585.2 136.8L585.6 137.3L586.0 139.3L586.4 138.5L586.8 138.4L587.2 137.6L587.6 138.8L588.0 137.5L588.4 136.3L588.8 140.1L589.2 137.8L589.6 137.2L590.0 139.3L590.4 138.6L590.8 135.9L591.2 140.4L591.6 137.7L592.0 139.4L592.4 136.1L592.8 135.1L593.2 137.0L593.6 138.9L594.0 137.1L594.0 278.3L593.6 276.5L593.2 278.4L592.8 280.3L592.4 279.3L592.0 276.0L591.6 277.7L591.2 275.0L590.8 279.5L590.4 276.8L590.0 276.1L589.6 278.2L589.2 277.6L588.8 275.3L588.4 279.1L588.0 277.9L587.6 276.6L587.2 277.8L586.8 277.0L586.4 276.9L586.0 276.1L585.6 278.1L585.2 278.6L584.8 279.0L584.4 277.2L584.0 275.7L583.6 278.8L583.2 277.6L582.8 278.7L582.4 280.1L582.0 283.4L581.6 295.6L581.2 272.7L580.8 273.1L580.4 276.7L580.0 282.0L579.6 279.7L579.2 280.7L578.8 282.5L578.4 281.7L578.0 281.1L577.6 283.6L577.2 282.9L576.8 281.3L576.4 282.4L576.0 280.3L575.6 282.0L575.2 282.9L574.8 282.4L574.4 283.5L574.0 283.5L573.6 281.1L573.2 278.8L572.8 280.2L572.4 278.8L572.0 277.9L571.6 280.1L571.2 277.4L570.8 278.2L570.4 279.2L570.0 279.1L569.6 279.6L569.2 276.2L568.8 274.3L568.4 278.2L568.0 273.4L567.6 275.9L567.2 276.5L566.8 266.1L566.4 242.6L566.0 256.3L565.6 271.8L565.2 270.8L564.8 270.4L564.4 270.0L564.0 270.0L563.6 273.4L563.2 272.7L562.8 266.3L562.4 248.2L562.0 270.4L561.6 273.6L561.2 271.3L560.8 269.3L560.4 271.2L560.0 271.9L559.6 269.9L559.2 268.2L558.8 270.1L558.4 268.2L558.0 267.6L557.6 262.7L557.2 269.0L556.8 283.7L556.4 274.4L556.0 274.9L555.6 274.9L555.2 273.9L554.8 273.6L554.4 272.6L554.0 275.9L553.6 273.5L553.2 274.2L552.8 276.3L552.4 273.2L552.0 273.0L551.6 272.2L551.2 276.6L550.8 272.7L550.4 276.8L550.0 274.4L549.6 274.6L549.2 274.4L548.8 275.9L548.4 276.7L548.0 276.1L547.6 276.4L547.2 272.7L546.8 275.4L546.4 272.6L546.0 274.4L545.6 275.3L545.2 272.7L544.8 272.9L544.4 276.1L544.0 272.5L543.6 275.3L543.2 272.7L542.8 273.3L542.4 271.6L542.0 274.5L541.6 272.9L541.2 272.7L540.8 270.2L540.4 274.9L540.0 273.7L539.6 270.7L539.2 269.6L538.8 270.3L538.4 273.3L538.0 269.4L537.6 273.0L537.2 269.6L536.8 271.0L536.4 271.5L536.0 269.5L535.6 271.4L535.2 269.5L534.8 273.3L534.4 265.4L534.0 268.2L533.6 269.2L533.2 267.4L532.8 269.6L532.4 266.2L532.0 266.0L531.6 267.4L531.2 264.8L530.8 264.3L530.4 262.7L530.0 264.3L529.6 263.4L529.2 262.4L528.8 264.8L528.4 261.1L528.0 260.7L527.6 261.1L527.2 262.2L526.8 262.6L526.4 261.1L526.0 261.5L525.6 268.5L525.2 271.3L524.8 271.8L524.4 272.4L524.0 272.0L523.6 276.3L523.2 276.3L522.8 276.2L522.4 272.3L522.0 276.5L521.6 276.3L521.2 276.4L520.8 274.3L520.4 275.5L520.0 273.0L519.6 276.5L519.2 276.4L518.8 276.2L518.4 276.7L518.0 273.5L517.6 273.6L517.2 274.3L516.8 275.5L516.4 278.5L516.0 274.5L515.6 274.3L515.2 280.7L514.8 278.8L514.4 274.6L514.0 277.4L513.6 275.4L513.2 275.9L512.8 277.9L512.4 279.3L512.0 278.5L511.6 281.2L511.2 281.0L510.8 282.3L510.4 281.1L510.0 284.3L509.6 283.3L509.2 284.1L508.8 283.0L508.4 283.2L508.0 278.6L507.6 277.8L507.2 279.3L506.8 275.3L506.4 276.2L506.0 275.9L505.6 274.6L505.2 271.8L504.8 271.7L504.4 270.2L504.0 274.2L503.6 270.7L503.2 274.1L502.8 272.2L502.4 270.0L502.0 271.0L501.6 272.0L501.2 270.0L500.8 270.3L500.4 268.5L500.0 270.5L499.6 270.8L499.2 269.8L498.8 269.8L498.4 267.4L498.0 265.6L497.6 266.3L497.2 265.4L496.8 265.5L496.4 266.1L496.0 266.9L495.6 259.0L495.2 257.9L494.8 260.1L494.4 257.5L494.0 262.7L493.6 264.6L493.2 266.8L492.8 264.2L492.4 267.1L492.0 268.7L491.6 267.0L491.2 269.1L490.8 267.2L490.4 266.2L490.0 268.3L489.6 268.0L489.2 269.4L488.8 272.3L488.4 266.6L488.0 260.1L487.6 260.1L487.2 253.4L486.8 253.1L486.4 252.8L486.0 252.3L485.6 248.6L485.2 251.8L484.8 247.3L484.4 248.3L484.0 247.3L483.6 242.7L483.2 242.3L482.8 241.6L482.4 243.4L482.0 244.6L481.6 242.1L481.2 244.1L480.8 245.4L480.4 247.8L480.0 248.7L479.6 248.0L479.2 245.8L478.8 246.5L478.4 247.4L478.0 251.3L477.6 247.6L477.2 248.9L476.8 272.0L476.4 272.0L476.0 272.0L475.6 219.1L475.2 218.9L474.8 218.7L474.4 218.5L474.0 218.3L473.6 218.2L473.2 218.0L472.8 218.0L472.4 218.2L472.0 218.4L471.6 218.6L471.2 218.7L470.8 218.9L470.4 219.1L470.0 219.3L469.6 219.5L469.2 219.6L468.8 219.8L468.4 219.9L468.0 220.1L467.6 220.3L467.2 220.4L466.8 220.1L466.4 219.4L466.0 218.7L465.6 219.0L465.2 219.3L464.8 219.7L464.4 220.0L464.0 220.3L463.6 220.1L463.2 219.9L462.8 219.7L462.4 219.5L462.0 219.2L461.6 219.0L461.2 218.8L460.8 218.6L460.4 218.4L460.0 218.2L459.6 218.3L459.2 218.5L458.8 218.6L458.4 218.8L458.0 218.9L457.6 296.0L457.2 296.0L456.8 296.0L456.4 296.0L456.0 296.0L455.6 296.0L455.2 296.0L454.8 221.4L454.4 221.4L454.0 221.4L453.6 296.0L453.2 296.5L452.8 296.1L452.4 296.1L452.0 296.5L451.6 296.4L451.2 296.5L450.8 296.4L450.4 296.5L450.0 296.5L449.6 295.9L449.2 294.9L448.8 293.0L448.4 293.0L448.0 294.9L447.6 296.3L447.2 296.0L446.8 296.5L446.4 296.5L446.0 296.5L445.6 296.4L445.2 295.9L444.8 296.1L444.4 294.4L444.0 295.9L443.6 296.5L443.2 295.3L442.8 296.5L442.4 295.6L442.0 296.5L441.6 296.3L441.2 295.5L440.8 296.4L440.4 296.1L440.0 294.4L439.6 296.5L439.2 295.4L438.8 296.4L438.4 296.0L438.0 294.3L437.6 296.5L437.2 295.0L436.8 296.1L436.4 295.3L436.0 293.5L435.6 292.5L435.2 294.5L434.8 296.1L434.4 296.5L434.0 295.4L433.6 296.5L433.2 294.9L432.8 295.8L432.4 294.7L432.0 296.5L431.6 296.5L431.2 296.5L430.8 296.0L430.4 293.9L430.0 291.7L429.6 289.1L429.2 287.6L428.8 290.4L428.4 292.8L428.0 295.0L427.6 296.5L427.2 294.9L426.8 296.5L426.4 295.5L426.0 296.4L425.6 296.5L425.2 294.7L424.8 295.4L424.4 296.5L424.0 294.8L423.6 294.6L423.2 296.2L422.8 294.4L422.4 296.5L422.0 295.3L421.6 295.6L421.2 294.3L420.8 295.1L420.4 296.5L420.0 294.6L419.6 296.4L419.2 296.2L418.8 296.5L418.4 296.2L418.0 295.5L417.6 295.6L417.2 296.5L416.8 295.9L416.4 296.5L416.0 296.2L415.6 296.3L415.2 296.5L414.8 296.3L414.4 296.5L414.0 296.5L413.6 296.3L413.2 296.5L412.8 296.3L412.4 295.5L412.0 295.5L411.6 296.5L411.2 296.2L410.8 296.0L410.4 296.5L410.0 296.3L409.6 296.3L409.2 295.9L408.8 296.3L408.4 296.1L408.0 296.3L407.6 296.4L407.2 296.0L406.8 296.1L406.4 296.0L406.0 296.5L405.6 295.2L405.2 296.5L404.8 295.5L404.4 296.1L404.0 296.5L403.6 294.9L403.2 295.7L402.8 296.5L402.4 296.5L402.0 296.4L401.6 296.2L401.2 296.4L400.8 296.5L400.4 296.5L400.0 295.2L399.6 295.2L399.2 296.4L398.8 296.5L398.4 295.4L398.0 296.5L397.6 295.3L397.2 296.0L396.8 294.9L396.4 296.4L396.0 294.8L395.6 296.5L395.2 296.3L394.8 294.5L394.4 294.7L394.0 296.5L393.6 296.5L393.2 294.5L392.8 295.4L392.4 296.2L392.0 296.5L391.6 294.8L391.2 296.2L390.8 296.4L390.4 296.5L390.0 296.2L389.6 296.4L389.2 296.0L388.8 296.5L388.4 294.8L388.0 295.9L387.6 296.1L387.2 296.5L386.8 296.5L386.4 296.3L386.0 295.0L385.6 296.4L385.2 295.3L384.8 296.3L384.4 294.9L384.0 296.5L383.6 296.5L383.2 295.7L382.8 296.5L382.4 296.4L382.0 294.3L381.6 295.1L381.2 296.3L380.8 296.4L380.4 296.1L380.0 296.4L379.6 294.6L379.2 296.4L378.8 296.4L378.4 296.3L378.0 295.8L377.6 296.5L377.2 296.5L376.8 295.9L376.4 296.1L376.0 296.4L375.6 296.5L375.2 296.5L374.8 296.1L374.4 295.4L374.0 296.5L373.6 296.4L373.2 296.5L372.8 295.8L372.4 296.4L372.0 296.5L371.6 296.5L371.2 295.9L370.8 296.0L370.4 296.5L370.0 296.5L369.6 296.5L369.2 296.4L368.8 296.5L368.4 296.0L368.0 296.0L367.6 296.5L367.2 294.6L366.8 295.5L366.4 296.5L366.0 296.3L365.6 295.1L365.2 296.4L364.8 294.7L364.4 296.1L364.0 294.5L363.6 296.5L363.2 296.5L362.8 296.4L362.4 296.5L362.0 294.8L361.6 295.2L361.2 295.3L360.8 296.3L360.4 296.5L360.0 294.4L359.6 295.9L359.2 295.3L358.8 296.5L358.4 296.2L358.0 294.3L357.6 296.4L357.2 296.4L356.8 296.1L356.4 295.0L356.0 296.5L355.6 296.5L355.2 296.5L354.8 296.5L354.4 295.6L354.0 296.4L353.6 296.1L353.2 296.4L352.8 295.2L352.4 296.5L352.0 295.9L351.6 295.2L351.2 295.6L350.8 295.8L350.4 296.0L350.0 296.3L349.6 296.5L349.2 296.3L348.8 295.7L348.4 296.2L348.0 296.5L347.6 296.5L347.2 296.5L346.8 294.4L346.4 295.0L346.0 294.4L345.6 296.4L345.2 296.1L344.8 296.5L344.4 296.5L344.0 296.5L343.6 295.6L343.2 296.5L342.8 296.5L342.4 295.4L342.0 296.4L341.6 296.4L341.2 296.4L340.8 296.0L340.4 295.5L340.0 295.3L339.6 295.6L339.2 295.4L338.8 296.5L338.4 294.7L338.0 296.2L337.6 296.3L337.2 296.5L336.8 296.4L336.4 294.6L336.0 294.6L335.6 296.3L335.2 296.5L334.8 296.5L334.4 294.7L334.0 295.9L333.6 294.8L333.2 295.6L332.8 296.5L332.4 296.5L332.0 296.4L331.6 295.7L331.2 296.5L330.8 296.0L330.4 294.6L330.0 296.5L329.6 296.4L329.2 294.9L328.8 295.6L328.4 296.5L328.0 294.8L327.6 296.5L327.2 296.5L326.8 296.5L326.4 295.5L326.0 295.3L325.6 296.3L325.2 296.5L324.8 294.9L324.4 296.4L324.0 296.5L323.6 294.8L323.2 296.4L322.8 296.3L322.4 296.5L322.0 296.3L321.6 295.3L321.2 295.3L320.8 296.4L320.4 296.5L320.0 294.5L319.6 296.5L319.2 294.6L318.8 296.4L318.4 296.5L318.0 296.5L317.6 296.5L317.2 296.4L316.8 296.4L316.4 296.4L316.0 295.9L315.6 296.5L315.2 295.6L314.8 294.7L314.4 296.5L314.0 296.4L313.6 294.7L313.2 294.3L312.8 295.6L312.4 295.0L312.0 294.9L311.6 296.4L311.2 296.5L310.8 296.5L310.4 296.5L310.0 294.5L309.6 296.5L309.2 296.4L308.8 296.5L308.4 294.6L308.0 295.9L307.6 296.3L307.2 296.5L306.8 296.5L306.4 296.2L306.0 294.6L305.6 296.4L305.2 295.5L304.8 296.5L304.4 296.5L304.0 295.3L303.6 296.4L303.2 294.5L302.8 296.5L302.4 296.2L302.0 295.6L301.6 295.4L301.2 296.5L300.8 295.8L300.4 296.3L300.0 296.4L299.6 296.5L299.2 296.5L298.8 294.8L298.4 295.8L298.0 296.5L297.6 296.3L297.2 295.8L296.8 296.2L296.4 296.5L296.0 296.4Z" fill="#6e6e6e"/></svg>
<svg style="left:690px;top:40px" width="480" height="120" viewBox="690 40 480 120"><circle cx="752" cy="99" r="43.6" fill="none" stroke="#1d1d1d" stroke-width="3.0"/><line x1="752" y1="99" x2="768.68" y2="58.72" stroke="#1d1d1d" stroke-width="3.3"/><line x1="752" y1="99" x2="792.28" y2="115.68" stroke="#1d1d1d" stroke-width="3.3"/><line x1="752" y1="99" x2="735.32" y2="139.28" stroke="#1d1d1d" stroke-width="3.3"/><line x1="752" y1="99" x2="711.72" y2="82.32" stroke="#1d1d1d" stroke-width="3.3"/><circle cx="752" cy="99" r="13.8" fill="#1c1c1c"/><circle cx="1108" cy="99" r="43.6" fill="none" stroke="#1d1d1d" stroke-width="3.0"/><line x1="1108" y1="99" x2="1124.68" y2="58.72" stroke="#1d1d1d" stroke-width="3.3"/><line x1="1108" y1="99" x2="1148.28" y2="115.68" stroke="#1d1d1d" stroke-width="3.3"/><line x1="1108" y1="99" x2="1091.32" y2="139.28" stroke="#1d1d1d" stroke-width="3.3"/><line x1="1108" y1="99" x2="1067.72" y2="82.32" stroke="#1d1d1d" stroke-width="3.3"/><circle cx="1108" cy="99" r="13.8" fill="#1c1c1c"/></svg>
<div style="left:922.8px;top:91.8px;width:14.0px;height:14.0px;background:#d43a32;border-radius:50%;box-shadow:0 0 10px 1px rgba(230,60,50,.45);"></div>
<div style="left:641.7px;top:162.2px;width:576.3px;height:48.4px;background:#1c1c1c;border-radius:6px;"></div>
<div style="left:841.11px;top:175.10px;font:400 24px/24px 'DejaVu Sans Mono', 'Liberation Mono', monospace;color:#e4e4e4;letter-spacing:-0.000px;white-space:pre;-webkit-text-stroke:.25px #e4e4e4;transform:scaleX(1.0373);transform-origin:0 0;">Recording...</div>
<div style="left:752.1px;top:263.0px;width:16.8px;height:16.8px;background:#8e3a38;border-radius:50%;box-shadow:0 0 8px rgba(200,60,55,.35);"></div>
<div style="left:779.50px;top:260.10px;font:700 21.8px/21.8px 'Liberation Sans', sans-serif;color:#858585;letter-spacing:0.063px;white-space:pre;-webkit-text-stroke:0.4px #858585;">REC</div>
<div style="left:899.98px;top:260.10px;font:700 21.8px/21.8px 'Liberation Sans', sans-serif;color:#e4e4e4;letter-spacing:0.767px;white-space:pre;-webkit-text-stroke:0.4px #e4e4e4;">STOP</div>
<div style="left:1055.67px;top:230.20px;font:700 17px/17px 'Liberation Sans', sans-serif;color:#e4e4e4;letter-spacing:1.438px;white-space:pre;-webkit-text-stroke:0.4px #e4e4e4;">BIT</div>
<div style="left:1012.0px;top:259.0px;width:119.0px;height:58.7px;background:#1c1c1c;border-radius:10px;"></div>
<div style="left:1021.0px;top:268.0px;width:49.0px;height:41.0px;background:#2b2b2b;border-radius:4px;"></div>
<div style="left:1070.0px;top:268.0px;width:52.0px;height:41.0px;background:#7fffd4;border-radius:4px;box-shadow:inset 0 0 9px 1px rgba(0,70,45,.55),0 0 4px rgba(127,255,212,.18);"></div>
<div style="left:1034.93px;top:279.70px;font:400 18px/18px 'Liberation Sans', sans-serif;color:#e4e4e4;letter-spacing:0.300px;white-space:pre;-webkit-text-stroke:0.18px #e4e4e4;">16</div>
<div style="left:1085.50px;top:279.70px;font:700 18px/18px 'Liberation Sans', sans-serif;color:#1a1a1a;letter-spacing:0.300px;white-space:pre;-webkit-text-stroke:0.4px #1a1a1a;">24</div>
<div style="left:1248.0px;top:20.3px;width:608.0px;height:312.7px;background:#1c1c1c;border-radius:12px;"></div>
<svg style="left:1248px;top:20px" width="608" height="313" viewBox="1248 20 608 313"><defs><linearGradient id="sg" gradientUnits="userSpaceOnUse" x1="0" y1="105" x2="0" y2="326"><stop offset="0" stop-color="#7fffd4" stop-opacity=".30"/><stop offset=".55" stop-color="#7fffd4" stop-opacity=".13"/><stop offset="1" stop-color="#7fffd4" stop-opacity=".015"/></linearGradient><clipPath id="sc"><rect x="1257" y="28" width="590" height="296.3"/></clipPath></defs><rect x="1393.8" y="29" width="1.4" height="295" fill="#fff" fill-opacity=".085"/><rect x="1590.2" y="29" width="1.4" height="295" fill="#fff" fill-opacity=".085"/><rect x="1786.6" y="29" width="1.4" height="295" fill="#fff" fill-opacity=".085"/><rect x="1257" y="100.7" width="590" height="5.2" fill="#fff" fill-opacity=".07"/><rect x="1257" y="174.0" width="590" height="5.2" fill="#fff" fill-opacity=".07"/><g clip-path="url(#sc)"><path d="M1257.3 324.3L1271.0 228.6L1286.5 224.1L1296.0 219.0L1304.7 215.8L1316.0 217.0L1328.4 219.5L1338.0 225.0L1348.5 230.4L1363.0 231.3L1370.0 235.0L1377.6 240.1L1388.0 241.0L1399.5 241.4L1407.7 255.1L1411.0 251.0L1415.9 247.8L1422.3 252.3L1430.5 267.8L1433.0 263.0L1436.4 259.6L1443.3 269.6L1448.4 266.0L1453.9 238.6L1457.9 235.9L1462.4 209.5L1467.0 152.9L1471.2 136.5L1475.7 156.6L1479.2 193.1L1483.0 140.2L1486.5 124.7L1489.8 142.0L1492.9 189.4L1496.2 166.6L1498.9 169.4L1501.6 140.2L1504.7 107.4L1507.5 113.7L1509.8 152.9L1512.6 229.5L1515.3 205.8L1518.0 202.2L1521.7 174.8L1524.1 183.9L1527.2 165.7L1530.3 134.7L1533.0 162.1L1536.3 251.4L1539.9 236.8L1542.7 156.6L1545.4 124.7L1548.1 174.8L1550.5 214.9L1553.2 156.6L1555.4 134.7L1559.2 211.3L1565.2 128.3L1567.8 162.1L1570.1 136.5L1575.6 202.2L1578.4 150.2L1581.1 163.9L1583.5 198.5L1586.6 220.4L1589.7 119.2L1594.4 231.3L1596.6 154.8L1598.8 211.3L1603.0 169.4L1606.3 220.4L1609.4 167.5L1610.8 193.1L1612.5 139.3L1616.6 174.8L1621.2 260.5L1624.5 179.4L1627.6 256.9L1629.4 207.6L1629.9 260.5L1633.1 163.0L1636.7 222.2L1640.4 238.6L1641.8 187.6L1643.1 269.6L1648.6 205.8L1650.4 267.8L1654.0 225.9L1658.6 178.5L1660.4 238.6L1662.2 183.9L1664.1 249.6L1665.5 193.1L1667.7 251.4L1669.2 222.1L1670.8 241.8L1672.0 222.9L1673.0 240.1L1674.3 222.1L1675.2 231.5L1676.3 200.7L1677.7 263.3L1678.6 203.0L1679.9 259.0L1681.3 221.8L1682.6 262.4L1683.5 223.0L1684.3 263.9L1685.6 236.8L1686.8 258.1L1688.2 238.1L1689.4 249.6L1690.5 208.0L1692.0 245.7L1693.4 209.9L1694.5 250.5L1695.4 197.1L1696.9 226.1L1698.1 175.1L1698.9 232.4L1700.0 183.6L1701.6 230.7L1702.8 184.2L1704.2 243.0L1705.3 193.1L1706.9 241.4L1708.4 191.4L1709.3 245.0L1710.2 192.5L1711.5 234.6L1712.7 196.1L1713.7 262.1L1715.0 204.3L1716.0 258.3L1717.1 208.0L1718.2 253.0L1719.8 221.3L1721.3 262.0L1722.7 196.1L1723.7 264.1L1724.7 201.1L1725.8 232.5L1726.7 184.6L1727.8 254.4L1729.1 214.2L1730.7 257.7L1732.0 224.5L1733.0 242.1L1733.9 203.1L1735.0 243.2L1736.0 220.9L1737.0 249.8L1738.6 212.6L1739.8 248.6L1740.7 211.5L1741.8 264.9L1743.2 226.7L1744.5 272.5L1745.6 216.3L1746.5 272.3L1747.5 232.5L1748.9 249.8L1749.9 212.7L1750.8 253.0L1751.9 220.9L1752.9 258.3L1754.0 222.4L1755.1 255.4L1756.7 199.6L1758.1 257.4L1759.4 213.8L1760.3 263.4L1761.9 225.7L1762.7 255.7L1764.1 231.2L1765.2 260.5L1766.9 200.4L1768.3 260.8L1769.9 214.1L1771.3 235.6L1772.9 220.9L1774.5 258.0L1776.0 227.5L1777.6 275.2L1778.9 231.3L1780.2 260.6L1781.5 197.1L1783.2 272.1L1784.7 210.6L1786.2 240.2L1787.5 219.0L1788.4 260.3L1789.9 190.5L1791.1 255.3L1792.1 214.7L1793.5 240.1L1795.1 214.1L1796.2 255.7L1797.5 215.4L1799.1 261.0L1800.5 230.2L1801.6 264.0L1803.0 221.0L1804.5 270.1L1806.1 221.1L1807.4 257.4L1808.5 224.3L1810.0 276.8L1811.5 245.5L1812.6 269.2L1813.6 252.4L1814.6 279.6L1815.8 258.2L1816.9 275.0L1818.4 246.5L1819.3 284.9L1820.2 256.4L1821.6 288.2L1822.9 267.5L1823.8 305.7L1824.8 266.5L1826.3 299.7L1827.3 265.5L1828.7 307.4L1829.9 280.9L1831.4 299.5L1833.0 277.5L1834.2 307.8L1835.2 267.3L1836.6 316.6L1837.6 284.7L1839.0 325.6L1840.3 297.0L1841.5 307.1L1842.9 280.5L1844.5 316.1L1846.0 293.4L1846.8 324.3L1846.8 324.3Z" fill="url(#sg)"/><path d="M1271.0 228.6L1286.5 224.1L1296.0 219.0L1304.7 215.8L1316.0 217.0L1328.4 219.5L1338.0 225.0L1348.5 230.4L1363.0 231.3L1370.0 235.0L1377.6 240.1L1388.0 241.0L1399.5 241.4L1407.7 255.1L1411.0 251.0L1415.9 247.8L1422.3 252.3L1430.5 267.8L1433.0 263.0L1436.4 259.6L1443.3 269.6L1448.4 266.0L1453.9 238.6L1457.9 235.9L1462.4 209.5L1467.0 152.9L1471.2 136.5L1475.7 156.6L1479.2 193.1L1483.0 140.2L1486.5 124.7L1489.8 142.0L1492.9 189.4L1496.2 166.6L1498.9 169.4L1501.6 140.2L1504.7 107.4L1507.5 113.7L1509.8 152.9L1512.6 229.5L1515.3 205.8L1518.0 202.2L1521.7 174.8L1524.1 183.9L1527.2 165.7L1530.3 134.7L1533.0 162.1L1536.3 251.4L1539.9 236.8L1542.7 156.6L1545.4 124.7L1548.1 174.8L1550.5 214.9L1553.2 156.6L1555.4 134.7L1559.2 211.3L1565.2 128.3L1567.8 162.1L1570.1 136.5L1575.6 202.2L1578.4 150.2L1581.1 163.9L1583.5 198.5L1586.6 220.4L1589.7 119.2L1594.4 231.3L1596.6 154.8L1598.8 211.3L1603.0 169.4L1606.3 220.4L1609.4 167.5L1610.8 193.1L1612.5 139.3L1616.6 174.8L1621.2 260.5L1624.5 179.4L1627.6 256.9L1629.4 207.6L1629.9 260.5L1633.1 163.0L1636.7 222.2L1640.4 238.6L1641.8 187.6L1643.1 269.6L1648.6 205.8L1650.4 267.8L1654.0 225.9L1658.6 178.5L1660.4 238.6L1662.2 183.9L1664.1 249.6L1665.5 193.1L1667.7 251.4L1669.2 222.1L1670.8 241.8L1672.0 222.9L1673.0 240.1L1674.3 222.1L1675.2 231.5L1676.3 200.7L1677.7 263.3L1678.6 203.0L1679.9 259.0L1681.3 221.8L1682.6 262.4L1683.5 223.0L1684.3 263.9L1685.6 236.8L1686.8 258.1L1688.2 238.1L1689.4 249.6L1690.5 208.0L1692.0 245.7L1693.4 209.9L1694.5 250.5L1695.4 197.1L1696.9 226.1L1698.1 175.1L1698.9 232.4L1700.0 183.6L1701.6 230.7L1702.8 184.2L1704.2 243.0L1705.3 193.1L1706.9 241.4L1708.4 191.4L1709.3 245.0L1710.2 192.5L1711.5 234.6L1712.7 196.1L1713.7 262.1L1715.0 204.3L1716.0 258.3L1717.1 208.0L1718.2 253.0L1719.8 221.3L1721.3 262.0L1722.7 196.1L1723.7 264.1L1724.7 201.1L1725.8 232.5L1726.7 184.6L1727.8 254.4L1729.1 214.2L1730.7 257.7L1732.0 224.5L1733.0 242.1L1733.9 203.1L1735.0 243.2L1736.0 220.9L1737.0 249.8L1738.6 212.6L1739.8 248.6L1740.7 211.5L1741.8 264.9L1743.2 226.7L1744.5 272.5L1745.6 216.3L1746.5 272.3L1747.5 232.5L1748.9 249.8L1749.9 212.7L1750.8 253.0L1751.9 220.9L1752.9 258.3L1754.0 222.4L1755.1 255.4L1756.7 199.6L1758.1 257.4L1759.4 213.8L1760.3 263.4L1761.9 225.7L1762.7 255.7L1764.1 231.2L1765.2 260.5L1766.9 200.4L1768.3 260.8L1769.9 214.1L1771.3 235.6L1772.9 220.9L1774.5 258.0L1776.0 227.5L1777.6 275.2L1778.9 231.3L1780.2 260.6L1781.5 197.1L1783.2 272.1L1784.7 210.6L1786.2 240.2L1787.5 219.0L1788.4 260.3L1789.9 190.5L1791.1 255.3L1792.1 214.7L1793.5 240.1L1795.1 214.1L1796.2 255.7L1797.5 215.4L1799.1 261.0L1800.5 230.2L1801.6 264.0L1803.0 221.0L1804.5 270.1L1806.1 221.1L1807.4 257.4L1808.5 224.3L1810.0 276.8L1811.5 245.5L1812.6 269.2L1813.6 252.4L1814.6 279.6L1815.8 258.2L1816.9 275.0L1818.4 246.5L1819.3 284.9L1820.2 256.4L1821.6 288.2L1822.9 267.5L1823.8 305.7L1824.8 266.5L1826.3 299.7L1827.3 265.5L1828.7 307.4L1829.9 280.9L1831.4 299.5L1833.0 277.5L1834.2 307.8L1835.2 267.3L1836.6 316.6L1837.6 284.7L1839.0 325.6L1840.3 297.0L1841.5 307.1L1842.9 280.5L1844.5 316.1L1846.0 293.4L1846.8 324.3" fill="none" stroke="#7fffd4" stroke-width="2.3" stroke-linejoin="round" stroke-opacity=".93"/></g><text transform="translate(1261.5 91.6) scale(1.16 3.45)" font-family="Liberation Sans, sans-serif" font-size="10" fill="#dcdcdc" fill-opacity=".92" stroke="#dcdcdc" stroke-width=".35" stroke-opacity=".8">-40</text><text transform="translate(1261.5 165.4) scale(1.16 3.45)" font-family="Liberation Sans, sans-serif" font-size="10" fill="#dcdcdc" fill-opacity=".92" stroke="#dcdcdc" stroke-width=".35" stroke-opacity=".8">-60</text><text transform="translate(1398.6 65.2) scale(1.16 3.45)" font-family="Liberation Sans, sans-serif" font-size="10" fill="#dcdcdc" fill-opacity=".92" stroke="#dcdcdc" stroke-width=".35" stroke-opacity=".8">100</text><text transform="translate(1595.6 65.2) scale(1.16 3.45)" font-family="Liberation Sans, sans-serif" font-size="10" fill="#dcdcdc" fill-opacity=".92" stroke="#dcdcdc" stroke-width=".35" stroke-opacity=".8">1k</text><text transform="translate(1792.2 65.2) scale(1.16 3.45)" font-family="Liberation Sans, sans-serif" font-size="10" fill="#dcdcdc" fill-opacity=".92" stroke="#dcdcdc" stroke-width=".35" stroke-opacity=".8">10k</text></svg>
<div style="left:72.2px;top:387.0px;width:27.6px;height:278.2px;background:#1c1c1c;border-radius:7px;"></div>
<div style="left:74.9px;top:393.7px;width:21.3px;height:8.0px;background:#252525;"></div>
<div style="left:74.9px;top:405.2px;width:21.3px;height:8.0px;background:#252525;"></div>
<div style="left:74.9px;top:416.7px;width:21.3px;height:8.0px;background:#252525;"></div>
<div style="left:74.9px;top:428.2px;width:21.3px;height:8.0px;background:#252525;"></div>
<div style="left:74.9px;top:439.6px;width:21.3px;height:8.0px;background:#252525;"></div>
<div style="left:74.9px;top:451.1px;width:21.3px;height:8.0px;background:#252525;"></div>
<div style="left:74.9px;top:462.6px;width:21.3px;height:8.0px;background:#252525;"></div>
<div style="left:74.9px;top:474.1px;width:21.3px;height:8.0px;background:#252525;"></div>
<div style="left:74.9px;top:485.6px;width:21.3px;height:8.0px;background:#252525;"></div>
<div style="left:74.9px;top:497.1px;width:21.3px;height:8.0px;background:#252525;"></div>
<div style="left:74.9px;top:508.5px;width:21.3px;height:8.0px;background:#252525;"></div>
<div style="left:74.9px;top:520.0px;width:21.3px;height:8.0px;background:#252525;"></div>
<div style="left:74.9px;top:531.5px;width:21.3px;height:8.0px;background:#252525;"></div>
<div style="left:74.9px;top:543.0px;width:21.3px;height:8.0px;background:#252525;"></div>
<div style="left:74.9px;top:554.5px;width:21.3px;height:8.0px;background:#252525;"></div>
<div style="left:74.9px;top:566.0px;width:21.3px;height:8.0px;background:#252525;"></div>
<div style="left:74.9px;top:577.5px;width:21.3px;height:8.0px;background:#252525;"></div>
<div style="left:74.9px;top:588.9px;width:21.3px;height:8.0px;background:rgba(127,255,212,0.05);box-shadow:0 0 6px rgba(127,255,212,0.26);"></div>
<div style="left:74.9px;top:600.4px;width:21.3px;height:8.0px;background:rgba(127,255,212,0.09);box-shadow:0 0 6px rgba(127,255,212,0.33999999999999997);"></div>
<div style="left:74.9px;top:611.9px;width:21.3px;height:8.0px;background:#7fffd4;box-shadow:0 0 7px rgba(127,255,212,.55);"></div>
<div style="left:74.9px;top:623.4px;width:21.3px;height:8.0px;background:#7fffd4;box-shadow:0 0 7px rgba(127,255,212,.55);"></div>
<div style="left:74.9px;top:634.9px;width:21.3px;height:8.0px;background:#7fffd4;box-shadow:0 0 7px rgba(127,255,212,.55);"></div>
<div style="left:74.9px;top:646.4px;width:21.3px;height:15.9px;background:#7fffd4;box-shadow:0 0 7px rgba(127,255,212,.55);"></div>
<div style="left:61.27px;top:696.74px;font:700 17.3px/17.3px 'Liberation Sans', sans-serif;color:#e4e4e4;letter-spacing:1.050px;white-space:pre;transform:rotate(-90deg) scaleX(1.0000);transform-origin:25.33px 8.46px;-webkit-text-stroke:.4px #e4e4e4;">DBFS</div>
<div style="left:131.0px;top:429.8px;width:62.4px;height:62.4px;background:#2d2d2d;border-radius:50%;box-shadow:2px 4px 9px rgba(0,0,0,.38);"></div>
<svg style="left:127.0px;top:425.8px" width="70.4" height="70.4" viewBox="0 0 70.40 70.40"><circle cx="35.20" cy="35.20" r="25.77" fill="#1b1b1b" stroke="#161616" stroke-width="1"/><circle cx="35.20" cy="35.20" r="21.78" fill="#2d2d2d"/><path d="M15.26 15.26A28.20 28.20 0 0 1 63.40 35.20" fill="none" stroke="#7fffd4" stroke-width="6.12" stroke-linecap="round"/><line x1="35.20" y1="35.20" x2="35.20" y2="13.56" stroke="#7fffd4" stroke-width="3.9" stroke-linecap="round"/></svg>
<div style="left:135.72px;top:507.50px;font:700 21.0px/21.0px 'Liberation Sans', sans-serif;color:#e4e4e4;letter-spacing:-0.150px;white-space:pre;-webkit-text-stroke:0.4px #e4e4e4;">GAIN</div>
<div style="left:131.46px;top:550.60px;font:400 22px/22px 'Liberation Sans', sans-serif;color:#e4e4e4;letter-spacing:0.000px;white-space:pre;-webkit-text-stroke:0.18px #e4e4e4;transform:scaleX(1.0598);transform-origin:0 0;">0.0dB</div>
<div style="left:137.0px;top:623.0px;width:48.9px;height:35.0px;background:#2d2d2d;border-radius:5px;border:2.5px solid #1a1a1a;box-sizing:border-box;"></div>
<div style="left:141.88px;top:670.90px;font:700 17.8px/17.8px 'Liberation Sans', sans-serif;color:#e4e4e4;letter-spacing:1.312px;white-space:pre;-webkit-text-stroke:0.4px #e4e4e4;">PAD</div>
<div style="left:231.4px;top:380.0px;width:1.6px;height:357.0px;background:#1b1b1b;"></div>
<div style="left:246.8px;top:380.0px;width:172.0px;height:356.8px;background:#1c1c1c;border-radius:11px;"></div>
<div style="left:280.5px;top:429.4px;width:105.3px;height:105.3px;background:#2d2d2d;border-radius:50%;box-shadow:2px 4px 9px rgba(0,0,0,.38);"></div>
<svg style="left:276.5px;top:425.4px" width="113.3" height="113.3" viewBox="0 0 113.30 113.30"><circle cx="56.65" cy="56.65" r="43.49" fill="#1b1b1b" stroke="#161616" stroke-width="1"/><circle cx="56.65" cy="56.65" r="36.75" fill="#2d2d2d"/><line x1="56.65" y1="56.65" x2="30.86" y2="82.44" stroke="#7fffd4" stroke-width="5.4" stroke-linecap="round"/></svg>
<div style="left:311.22px;top:553.10px;font:700 21.0px/21.0px 'Liberation Sans', sans-serif;color:#e4e4e4;letter-spacing:0.125px;white-space:pre;-webkit-text-stroke:0.4px #e4e4e4;">HPF</div>
<div style="left:293.8px;top:585.9px;width:77.0px;height:40.0px;background:#242424;border-radius:6px;"></div>
<div style="left:303.86px;top:596.30px;font:400 21.4px/21.4px 'Liberation Sans', sans-serif;color:#e4e4e4;letter-spacing:0.726px;white-space:pre;-webkit-text-stroke:0.18px #e4e4e4;transform:scaleX(1.0900);transform-origin:0 0;">20Hz</div>
<div style="left:433.1px;top:380.1px;width:282.1px;height:287.8px;background:#1c1c1c;border-radius:11px;"></div>
<div style="left:465.1px;top:399.9px;width:84.0px;height:84.0px;background:#2d2d2d;border-radius:50%;box-shadow:2px 4px 9px rgba(0,0,0,.38);"></div>
<svg style="left:461.1px;top:395.9px" width="92.0" height="92.0" viewBox="0 0 92.00 92.00"><circle cx="46.00" cy="46.00" r="34.69" fill="#1b1b1b" stroke="#161616" stroke-width="1"/><circle cx="46.00" cy="46.00" r="29.32" fill="#2d2d2d"/><path d="M19.15 19.15A37.97 37.97 0 0 1 83.97 46.00" fill="none" stroke="#7fffd4" stroke-width="8.23" stroke-linecap="round"/><line x1="46.00" y1="46.00" x2="46.00" y2="17.45" stroke="#7fffd4" stroke-width="5.4" stroke-linecap="round"/></svg>
<div style="left:598.9px;top:399.9px;width:84.0px;height:84.0px;background:#2d2d2d;border-radius:50%;box-shadow:2px 4px 9px rgba(0,0,0,.38);"></div>
<svg style="left:594.9px;top:395.9px" width="92.0" height="92.0" viewBox="0 0 92.00 92.00"><circle cx="46.00" cy="46.00" r="34.69" fill="#1b1b1b" stroke="#161616" stroke-width="1"/><circle cx="46.00" cy="46.00" r="29.32" fill="#2d2d2d"/><path d="M19.15 19.15A37.97 37.97 0 0 1 80.13 29.36" fill="none" stroke="#7fffd4" stroke-width="8.23" stroke-linecap="round"/><line x1="46.00" y1="46.00" x2="32.77" y2="20.70" stroke="#7fffd4" stroke-width="5.4" stroke-linecap="round"/></svg>
<div style="left:480.53px;top:501.10px;font:700 21.0px/21.0px 'Liberation Sans', sans-serif;color:#e4e4e4;letter-spacing:-0.150px;white-space:pre;-webkit-text-stroke:0.4px #e4e4e4;">GAIN</div>
<div style="left:613.81px;top:501.10px;font:700 21.0px/21.0px 'Liberation Sans', sans-serif;color:#e4e4e4;letter-spacing:-0.200px;white-space:pre;-webkit-text-stroke:0.4px #e4e4e4;transform:scaleX(0.9401);transform-origin:0 0;">FREQ</div>
<div style="left:474.8px;top:534.0px;width:63.7px;height:39.8px;background:#242424;border-radius:6px;"></div>
<div style="left:485.59px;top:544.30px;font:400 21.4px/21.4px 'Liberation Sans', sans-serif;color:#e4e4e4;letter-spacing:0.450px;white-space:pre;-webkit-text-stroke:0.18px #e4e4e4;transform:scaleX(1.0900);transform-origin:0 0;">0dB</div>
<div style="left:596.5px;top:534.0px;width:87.9px;height:39.8px;background:#242424;border-radius:6px;"></div>
<div style="left:605.67px;top:544.30px;font:400 21.4px/21.4px 'Liberation Sans', sans-serif;color:#e4e4e4;letter-spacing:0.338px;white-space:pre;-webkit-text-stroke:0.18px #e4e4e4;transform:scaleX(1.0900);transform-origin:0 0;">100Hz</div>
<div style="left:456.0px;top:604.2px;width:103.1px;height:40.8px;background:#7fffd4;border-radius:4px;box-shadow:inset 0 0 10px 1px rgba(0,70,45,.6),0 0 4px rgba(127,255,212,.18);"></div>
<div style="left:470.30px;top:616.30px;font:700 18.2px/18.2px 'Liberation Sans', sans-serif;color:#1a1a1a;letter-spacing:-0.090px;white-space:pre;-webkit-text-stroke:0.4px #1a1a1a;">STEREO</div>
<div style="left:559.6px;top:604.2px;width:62.9px;height:40.8px;background:#2a2a2a;border-radius:4px;"></div>
<div style="left:571.96px;top:617.40px;font:400 17.6px/17.6px 'Liberation Sans', sans-serif;color:#e4e4e4;letter-spacing:0.193px;white-space:pre;-webkit-text-stroke:0.18px #e4e4e4;transform:scaleX(1.0900);transform-origin:0 0;">MID</div>
<div style="left:622.6px;top:604.2px;width:68.4px;height:40.8px;background:#2a2a2a;border-radius:4px;"></div>
<div style="left:635.62px;top:617.40px;font:400 17.6px/17.6px 'Liberation Sans', sans-serif;color:#e4e4e4;letter-spacing:0.140px;white-space:pre;-webkit-text-stroke:0.18px #e4e4e4;">SIDE</div>
<div style="left:729.1px;top:380.1px;width:282.1px;height:287.8px;background:#1c1c1c;border-radius:11px;"></div>
<div style="left:761.1px;top:399.9px;width:84.0px;height:84.0px;background:#2d2d2d;border-radius:50%;box-shadow:2px 4px 9px rgba(0,0,0,.38);"></div>
<svg style="left:757.1px;top:395.9px" width="92.0" height="92.0" viewBox="0 0 92.00 92.00"><circle cx="46.00" cy="46.00" r="34.69" fill="#1b1b1b" stroke="#161616" stroke-width="1"/><circle cx="46.00" cy="46.00" r="29.32" fill="#2d2d2d"/><path d="M19.15 19.15A37.97 37.97 0 0 1 83.97 46.00" fill="none" stroke="#7fffd4" stroke-width="8.23" stroke-linecap="round"/><line x1="46.00" y1="46.00" x2="46.00" y2="17.45" stroke="#7fffd4" stroke-width="5.4" stroke-linecap="round"/></svg>
<div style="left:894.9px;top:399.9px;width:84.0px;height:84.0px;background:#2d2d2d;border-radius:50%;box-shadow:2px 4px 9px rgba(0,0,0,.38);"></div>
<svg style="left:890.9px;top:395.9px" width="92.0" height="92.0" viewBox="0 0 92.00 92.00"><circle cx="46.00" cy="46.00" r="34.69" fill="#1b1b1b" stroke="#161616" stroke-width="1"/><circle cx="46.00" cy="46.00" r="29.32" fill="#2d2d2d"/><line x1="46.00" y1="46.00" x2="25.81" y2="66.19" stroke="#7fffd4" stroke-width="5.4" stroke-linecap="round"/></svg>
<div style="left:776.53px;top:501.10px;font:700 21.0px/21.0px 'Liberation Sans', sans-serif;color:#e4e4e4;letter-spacing:-0.150px;white-space:pre;-webkit-text-stroke:0.4px #e4e4e4;">GAIN</div>
<div style="left:909.81px;top:501.10px;font:700 21.0px/21.0px 'Liberation Sans', sans-serif;color:#e4e4e4;letter-spacing:-0.200px;white-space:pre;-webkit-text-stroke:0.4px #e4e4e4;transform:scaleX(0.9401);transform-origin:0 0;">FREQ</div>
<div style="left:770.8px;top:534.0px;width:63.7px;height:39.8px;background:#242424;border-radius:6px;"></div>
<div style="left:781.59px;top:544.30px;font:400 21.4px/21.4px 'Liberation Sans', sans-serif;color:#e4e4e4;letter-spacing:0.450px;white-space:pre;-webkit-text-stroke:0.18px #e4e4e4;transform:scaleX(1.0900);transform-origin:0 0;">0dB</div>
<div style="left:890.8px;top:534.0px;width:91.2px;height:39.8px;background:#242424;border-radius:6px;"></div>
<div style="left:901.19px;top:544.30px;font:400 21.4px/21.4px 'Liberation Sans', sans-serif;color:#e4e4e4;letter-spacing:0.747px;white-space:pre;-webkit-text-stroke:0.18px #e4e4e4;transform:scaleX(1.0900);transform-origin:0 0;">500Hz</div>
<div style="left:752.0px;top:604.2px;width:103.1px;height:40.8px;background:#7fffd4;border-radius:4px;box-shadow:inset 0 0 10px 1px rgba(0,70,45,.6),0 0 4px rgba(127,255,212,.18);"></div>
<div style="left:766.30px;top:616.30px;font:700 18.2px/18.2px 'Liberation Sans', sans-serif;color:#1a1a1a;letter-spacing:-0.090px;white-space:pre;-webkit-text-stroke:0.4px #1a1a1a;">STEREO</div>
<div style="left:855.6px;top:604.2px;width:62.9px;height:40.8px;background:#2a2a2a;border-radius:4px;"></div>
<div style="left:867.96px;top:617.40px;font:400 17.6px/17.6px 'Liberation Sans', sans-serif;color:#e4e4e4;letter-spacing:0.193px;white-space:pre;-webkit-text-stroke:0.18px #e4e4e4;transform:scaleX(1.0900);transform-origin:0 0;">MID</div>
<div style="left:918.6px;top:604.2px;width:68.4px;height:40.8px;background:#2a2a2a;border-radius:4px;"></div>
<div style="left:931.62px;top:617.40px;font:400 17.6px/17.6px 'Liberation Sans', sans-serif;color:#e4e4e4;letter-spacing:0.140px;white-space:pre;-webkit-text-stroke:0.18px #e4e4e4;">SIDE</div>
<div style="left:1025.1px;top:380.1px;width:282.1px;height:287.8px;background:#1c1c1c;border-radius:11px;"></div>
<div style="left:1057.1px;top:399.9px;width:84.0px;height:84.0px;background:#2d2d2d;border-radius:50%;box-shadow:2px 4px 9px rgba(0,0,0,.38);"></div>
<svg style="left:1053.1px;top:395.9px" width="92.0" height="92.0" viewBox="0 0 92.00 92.00"><circle cx="46.00" cy="46.00" r="34.69" fill="#1b1b1b" stroke="#161616" stroke-width="1"/><circle cx="46.00" cy="46.00" r="29.32" fill="#2d2d2d"/><path d="M19.15 19.15A37.97 37.97 0 0 1 83.97 46.00" fill="none" stroke="#7fffd4" stroke-width="8.23" stroke-linecap="round"/><line x1="46.00" y1="46.00" x2="46.00" y2="17.45" stroke="#7fffd4" stroke-width="5.4" stroke-linecap="round"/></svg>
<div style="left:1190.9px;top:399.9px;width:84.0px;height:84.0px;background:#2d2d2d;border-radius:50%;box-shadow:2px 4px 9px rgba(0,0,0,.38);"></div>
<svg style="left:1186.9px;top:395.9px" width="92.0" height="92.0" viewBox="0 0 92.00 92.00"><circle cx="46.00" cy="46.00" r="34.69" fill="#1b1b1b" stroke="#161616" stroke-width="1"/><circle cx="46.00" cy="46.00" r="29.32" fill="#2d2d2d"/><path d="M19.15 19.15A37.97 37.97 0 0 1 83.97 46.00" fill="none" stroke="#7fffd4" stroke-width="8.23" stroke-linecap="round"/><line x1="46.00" y1="46.00" x2="46.00" y2="17.45" stroke="#7fffd4" stroke-width="5.4" stroke-linecap="round"/></svg>
<div style="left:1072.52px;top:501.10px;font:700 21.0px/21.0px 'Liberation Sans', sans-serif;color:#e4e4e4;letter-spacing:-0.150px;white-space:pre;-webkit-text-stroke:0.4px #e4e4e4;">GAIN</div>
<div style="left:1205.81px;top:501.10px;font:700 21.0px/21.0px 'Liberation Sans', sans-serif;color:#e4e4e4;letter-spacing:-0.200px;white-space:pre;-webkit-text-stroke:0.4px #e4e4e4;transform:scaleX(0.9401);transform-origin:0 0;">FREQ</div>
<div style="left:1066.8px;top:534.0px;width:63.7px;height:39.8px;background:#242424;border-radius:6px;"></div>
<div style="left:1077.59px;top:544.30px;font:400 21.4px/21.4px 'Liberation Sans', sans-serif;color:#e4e4e4;letter-spacing:0.450px;white-space:pre;-webkit-text-stroke:0.18px #e4e4e4;transform:scaleX(1.0900);transform-origin:0 0;">0dB</div>
<div style="left:1186.6px;top:534.0px;width:91.5px;height:39.8px;background:#242424;border-radius:6px;"></div>
<div style="left:1196.50px;top:544.30px;font:400 21.4px/21.4px 'Liberation Sans', sans-serif;color:#e4e4e4;letter-spacing:-0.000px;white-space:pre;-webkit-text-stroke:0.18px #e4e4e4;transform:scaleX(1.0696);transform-origin:0 0;">1.5kHz</div>
<div style="left:1048.0px;top:604.2px;width:103.1px;height:40.8px;background:#7fffd4;border-radius:4px;box-shadow:inset 0 0 10px 1px rgba(0,70,45,.6),0 0 4px rgba(127,255,212,.18);"></div>
<div style="left:1062.30px;top:616.30px;font:700 18.2px/18.2px 'Liberation Sans', sans-serif;color:#1a1a1a;letter-spacing:-0.090px;white-space:pre;-webkit-text-stroke:0.4px #1a1a1a;">STEREO</div>
<div style="left:1151.6px;top:604.2px;width:62.9px;height:40.8px;background:#2a2a2a;border-radius:4px;"></div>
<div style="left:1163.95px;top:617.40px;font:400 17.6px/17.6px 'Liberation Sans', sans-serif;color:#e4e4e4;letter-spacing:0.193px;white-space:pre;-webkit-text-stroke:0.18px #e4e4e4;transform:scaleX(1.0900);transform-origin:0 0;">MID</div>
<div style="left:1214.6px;top:604.2px;width:68.4px;height:40.8px;background:#2a2a2a;border-radius:4px;"></div>
<div style="left:1227.61px;top:617.40px;font:400 17.6px/17.6px 'Liberation Sans', sans-serif;color:#e4e4e4;letter-spacing:0.140px;white-space:pre;-webkit-text-stroke:0.18px #e4e4e4;">SIDE</div>
<div style="left:1321.1px;top:380.1px;width:282.1px;height:287.8px;background:#1c1c1c;border-radius:11px;"></div>
<div style="left:1353.1px;top:399.9px;width:84.0px;height:84.0px;background:#2d2d2d;border-radius:50%;box-shadow:2px 4px 9px rgba(0,0,0,.38);"></div>
<svg style="left:1349.1px;top:395.9px" width="92.0" height="92.0" viewBox="0 0 92.00 92.00"><circle cx="46.00" cy="46.00" r="34.69" fill="#1b1b1b" stroke="#161616" stroke-width="1"/><circle cx="46.00" cy="46.00" r="29.32" fill="#2d2d2d"/><path d="M19.15 19.15A37.97 37.97 0 0 1 83.97 46.00" fill="none" stroke="#7fffd4" stroke-width="8.23" stroke-linecap="round"/><line x1="46.00" y1="46.00" x2="46.00" y2="17.45" stroke="#7fffd4" stroke-width="5.4" stroke-linecap="round"/></svg>
<div style="left:1486.9px;top:399.9px;width:84.0px;height:84.0px;background:#2d2d2d;border-radius:50%;box-shadow:2px 4px 9px rgba(0,0,0,.38);"></div>
<svg style="left:1482.9px;top:395.9px" width="92.0" height="92.0" viewBox="0 0 92.00 92.00"><circle cx="46.00" cy="46.00" r="34.69" fill="#1b1b1b" stroke="#161616" stroke-width="1"/><circle cx="46.00" cy="46.00" r="29.32" fill="#2d2d2d"/><line x1="46.00" y1="46.00" x2="25.81" y2="66.19" stroke="#7fffd4" stroke-width="5.4" stroke-linecap="round"/></svg>
<div style="left:1368.52px;top:501.10px;font:700 21.0px/21.0px 'Liberation Sans', sans-serif;color:#e4e4e4;letter-spacing:-0.150px;white-space:pre;-webkit-text-stroke:0.4px #e4e4e4;">GAIN</div>
<div style="left:1501.81px;top:501.10px;font:700 21.0px/21.0px 'Liberation Sans', sans-serif;color:#e4e4e4;letter-spacing:-0.200px;white-space:pre;-webkit-text-stroke:0.4px #e4e4e4;transform:scaleX(0.9401);transform-origin:0 0;">FREQ</div>
<div style="left:1362.8px;top:534.0px;width:63.7px;height:39.8px;background:#242424;border-radius:6px;"></div>
<div style="left:1373.59px;top:544.30px;font:400 21.4px/21.4px 'Liberation Sans', sans-serif;color:#e4e4e4;letter-spacing:0.450px;white-space:pre;-webkit-text-stroke:0.18px #e4e4e4;transform:scaleX(1.0900);transform-origin:0 0;">0dB</div>
<div style="left:1480.4px;top:534.0px;width:95.9px;height:39.8px;background:#242424;border-radius:6px;"></div>
<div style="left:1491.34px;top:544.30px;font:400 21.4px/21.4px 'Liberation Sans', sans-serif;color:#e4e4e4;letter-spacing:0.326px;white-space:pre;-webkit-text-stroke:0.18px #e4e4e4;transform:scaleX(1.0900);transform-origin:0 0;">8.0kHz</div>
<div style="left:1344.0px;top:604.2px;width:103.1px;height:40.8px;background:#7fffd4;border-radius:4px;box-shadow:inset 0 0 10px 1px rgba(0,70,45,.6),0 0 4px rgba(127,255,212,.18);"></div>
<div style="left:1358.30px;top:616.30px;font:700 18.2px/18.2px 'Liberation Sans', sans-serif;color:#1a1a1a;letter-spacing:-0.090px;white-space:pre;-webkit-text-stroke:0.4px #1a1a1a;">STEREO</div>
<div style="left:1447.6px;top:604.2px;width:62.9px;height:40.8px;background:#2a2a2a;border-radius:4px;"></div>
<div style="left:1459.95px;top:617.40px;font:400 17.6px/17.6px 'Liberation Sans', sans-serif;color:#e4e4e4;letter-spacing:0.193px;white-space:pre;-webkit-text-stroke:0.18px #e4e4e4;transform:scaleX(1.0900);transform-origin:0 0;">MID</div>
<div style="left:1510.6px;top:604.2px;width:68.4px;height:40.8px;background:#2a2a2a;border-radius:4px;"></div>
<div style="left:1523.61px;top:617.40px;font:400 17.6px/17.6px 'Liberation Sans', sans-serif;color:#e4e4e4;letter-spacing:0.140px;white-space:pre;-webkit-text-stroke:0.18px #e4e4e4;">SIDE</div>
<div style="left:1617.1px;top:380.2px;width:171.9px;height:356.6px;background:#1c1c1c;border-radius:11px;"></div>
<div style="left:1650.3px;top:429.5px;width:105.3px;height:105.3px;background:#2d2d2d;border-radius:50%;box-shadow:2px 4px 9px rgba(0,0,0,.38);"></div>
<svg style="left:1646.3px;top:425.5px" width="113.3" height="113.3" viewBox="0 0 113.30 113.30"><circle cx="56.65" cy="56.65" r="43.49" fill="#1b1b1b" stroke="#161616" stroke-width="1"/><circle cx="56.65" cy="56.65" r="36.75" fill="#2d2d2d"/><path d="M22.99 22.99A47.60 47.60 0 1 1 22.99 90.31" fill="none" stroke="#7fffd4" stroke-width="10.32" stroke-linecap="round"/><line x1="56.65" y1="56.65" x2="82.44" y2="82.44" stroke="#7fffd4" stroke-width="5.4" stroke-linecap="round"/></svg>
<div style="left:1683.37px;top:553.50px;font:700 21.0px/21.0px 'Liberation Sans', sans-serif;color:#e4e4e4;letter-spacing:-0.200px;white-space:pre;-webkit-text-stroke:0.4px #e4e4e4;transform:scaleX(0.9677);transform-origin:0 0;">LPF</div>
<div style="left:1649.0px;top:586.0px;width:106.8px;height:39.9px;background:#242424;border-radius:6px;"></div>
<div style="left:1658.46px;top:596.35px;font:400 21.4px/21.4px 'Liberation Sans', sans-serif;color:#e4e4e4;letter-spacing:0.353px;white-space:pre;-webkit-text-stroke:0.18px #e4e4e4;transform:scaleX(1.0900);transform-origin:0 0;">20.0kHz</div>
<div style="left:1679.8px;top:656.0px;width:45.2px;height:31.0px;background:#2d2d2d;border-radius:3px;"></div>
<div style="left:1664.35px;top:701.60px;font:700 18.0px/18.0px 'Liberation Sans', sans-serif;color:#e4e4e4;letter-spacing:0.615px;white-space:pre;-webkit-text-stroke:0.4px #e4e4e4;">BYPASS</div>
<div style="left:-12.0px;top:769.0px;width:250.1px;height:626.2px;background:#2d2d2d;border-radius:9px;"></div>
<div style="left:35.18px;top:789.40px;font:700 21.8px/21.8px 'Liberation Sans', sans-serif;color:#e4e4e4;letter-spacing:1.961px;white-space:pre;text-shadow:1px 2px 3px rgba(0,0,0,.55);-webkit-text-stroke:0.4px #e4e4e4;">SATURATION</div>
<div style="left:61.4px;top:857.9px;width:105.3px;height:105.3px;background:#2d2d2d;border-radius:50%;box-shadow:2px 4px 9px rgba(0,0,0,.38);"></div>
<svg style="left:57.4px;top:853.9px" width="113.3" height="113.3" viewBox="0 0 113.30 113.30"><circle cx="56.65" cy="56.65" r="43.49" fill="#1b1b1b" stroke="#161616" stroke-width="1"/><circle cx="56.65" cy="56.65" r="36.75" fill="#2d2d2d"/><line x1="56.65" y1="56.65" x2="30.86" y2="82.44" stroke="#7fffd4" stroke-width="5.4" stroke-linecap="round"/></svg>
<div style="left:82.64px;top:982.10px;font:700 21.0px/21.0px 'Liberation Sans', sans-serif;color:#e4e4e4;letter-spacing:-0.200px;white-space:pre;-webkit-text-stroke:0.4px #e4e4e4;transform:scaleX(0.9869);transform-origin:0 0;">DRIVE</div>
<div style="left:96.54px;top:1023.60px;font:400 22px/22px 'Liberation Sans', sans-serif;color:#e4e4e4;letter-spacing:0.000px;white-space:pre;-webkit-text-stroke:0.18px #e4e4e4;transform:scaleX(1.0895);transform-origin:0 0;">0%</div>
<div style="left:82.8px;top:1099.8px;width:62.4px;height:62.4px;background:#2d2d2d;border-radius:50%;box-shadow:2px 4px 9px rgba(0,0,0,.38);"></div>
<svg style="left:78.8px;top:1095.8px" width="70.4" height="70.4" viewBox="0 0 70.40 70.40"><circle cx="35.20" cy="35.20" r="25.77" fill="#1b1b1b" stroke="#161616" stroke-width="1"/><circle cx="35.20" cy="35.20" r="21.78" fill="#2d2d2d"/><line x1="35.20" y1="35.20" x2="19.90" y2="50.50" stroke="#7fffd4" stroke-width="3.9" stroke-linecap="round"/></svg>
<div style="left:93.83px;top:1178.30px;font:700 21.0px/21.0px 'Liberation Sans', sans-serif;color:#e4e4e4;letter-spacing:0.725px;white-space:pre;-webkit-text-stroke:0.4px #e4e4e4;">MIX</div>
<div style="left:96.54px;top:1218.90px;font:400 22px/22px 'Liberation Sans', sans-serif;color:#e4e4e4;letter-spacing:0.000px;white-space:pre;-webkit-text-stroke:0.18px #e4e4e4;transform:scaleX(1.0895);transform-origin:0 0;">0%</div>
<div style="left:90.0px;top:1292.1px;width:49.0px;height:33.9px;background:#2d2d2d;border-radius:5px;border:2.5px solid #1a1a1a;box-sizing:border-box;"></div>
<div style="left:76.08px;top:1339.60px;font:700 17.6px/17.6px 'Liberation Sans', sans-serif;color:#e4e4e4;letter-spacing:0.765px;white-space:pre;-webkit-text-stroke:0.4px #e4e4e4;">BYPASS</div>
<div style="left:256.2px;top:769.0px;width:730.0px;height:626.2px;background:#2d2d2d;border-radius:9px;"></div>
<div style="left:463.95px;top:786.90px;font:700 19.0px/19.0px 'Liberation Sans', sans-serif;color:#e4e4e4;letter-spacing:0.564px;white-space:pre;text-shadow:1px 2px 3px rgba(0,0,0,.55);-webkit-text-stroke:0.4px #e4e4e4;">DUAL PARALLEL COMPRESSOR</div>
<div style="left:491.3px;top:819.7px;width:40.0px;height:40.0px;background:#2d2d2d;border-radius:50%;box-shadow:2px 4px 9px rgba(0,0,0,.38);"></div>
<svg style="left:487.3px;top:815.7px" width="48.0" height="48.0" viewBox="0 0 48.00 48.00"><circle cx="24.00" cy="24.00" r="16.52" fill="#1b1b1b" stroke="#161616" stroke-width="1"/><circle cx="24.00" cy="24.00" r="13.96" fill="#2d2d2d"/><path d="M11.22 11.22A18.08 18.08 0 0 1 42.08 24.00" fill="none" stroke="#7fffd4" stroke-width="3.92" stroke-linecap="round"/><line x1="24.00" y1="24.00" x2="24.00" y2="10.08" stroke="#7fffd4" stroke-width="2.4" stroke-linecap="round"/></svg>
<div style="left:470.18px;top:873.30px;font:700 16.0px/16.0px 'Liberation Sans', sans-serif;color:#e4e4e4;letter-spacing:0.521px;white-space:pre;-webkit-text-stroke:0.4px #e4e4e4;">BALANCE</div>
<div style="left:473.74px;top:909.80px;font:400 22px/22px 'Liberation Sans', sans-serif;color:#e4e4e4;letter-spacing:1.431px;white-space:pre;-webkit-text-stroke:0.18px #e4e4e4;transform:scaleX(1.0900);transform-origin:0 0;">50-</div>
<div style="left:473.74px;top:942.80px;font:400 22px/22px 'Liberation Sans', sans-serif;color:#e4e4e4;letter-spacing:0.014px;white-space:pre;-webkit-text-stroke:0.18px #e4e4e4;transform:scaleX(1.0900);transform-origin:0 0;">50%</div>
<div style="left:601.2px;top:822.0px;width:67.6px;height:67.6px;background:#2d2d2d;border-radius:50%;box-shadow:2px 4px 9px rgba(0,0,0,.38);"></div>
<svg style="left:597.2px;top:818.0px" width="75.6" height="75.6" viewBox="0 0 75.60 75.60"><circle cx="37.80" cy="37.80" r="27.92" fill="#1b1b1b" stroke="#161616" stroke-width="1"/><circle cx="37.80" cy="37.80" r="23.59" fill="#2d2d2d"/><line x1="37.80" y1="37.80" x2="21.11" y2="54.49" stroke="#7fffd4" stroke-width="3.9" stroke-linecap="round"/></svg>
<div style="left:618.68px;top:906.60px;font:700 16.0px/16.0px 'Liberation Sans', sans-serif;color:#e4e4e4;letter-spacing:1.587px;white-space:pre;-webkit-text-stroke:0.4px #e4e4e4;">MIX</div>
<div style="left:617.54px;top:942.40px;font:400 22px/22px 'Liberation Sans', sans-serif;color:#e4e4e4;letter-spacing:0.000px;white-space:pre;-webkit-text-stroke:0.18px #e4e4e4;transform:scaleX(1.0895);transform-origin:0 0;">0%</div>
<div style="left:721.2px;top:862.5px;width:49.0px;height:34.0px;background:#2d2d2d;border-radius:5px;border:2.5px solid #1a1a1a;box-sizing:border-box;"></div>
<div style="left:710.88px;top:908.50px;font:700 16.0px/16.0px 'Liberation Sans', sans-serif;color:#e4e4e4;letter-spacing:0.625px;white-space:pre;-webkit-text-stroke:0.4px #e4e4e4;">BYPASS</div>
<div style="left:270.2px;top:987.0px;width:701.2px;height:1.6px;background:#1b1b1b;"></div>
<div style="left:269.8px;top:1003.0px;width:344.4px;height:377.5px;background:#1c1c1c;border-radius:11px;"></div>
<div style="left:407.45px;top:1020.90px;font:700 17.0px/17.0px 'Liberation Sans', sans-serif;color:#e4e4e4;letter-spacing:0.210px;white-space:pre;-webkit-text-stroke:0.4px #e4e4e4;">COMP A</div>
<div style="left:288.0px;top:1081.7px;width:21.0px;height:8.0px;background:#252525;"></div>
<div style="left:288.0px;top:1093.2px;width:21.0px;height:8.0px;background:#252525;"></div>
<div style="left:288.0px;top:1104.8px;width:21.0px;height:8.0px;background:#252525;"></div>
<div style="left:288.0px;top:1116.3px;width:21.0px;height:8.0px;background:#252525;"></div>
<div style="left:288.0px;top:1127.9px;width:21.0px;height:8.0px;background:#252525;"></div>
<div style="left:288.0px;top:1139.4px;width:21.0px;height:8.0px;background:#252525;"></div>
<div style="left:288.0px;top:1150.9px;width:21.0px;height:8.0px;background:#252525;"></div>
<div style="left:288.0px;top:1162.5px;width:21.0px;height:8.0px;background:#252525;"></div>
<div style="left:288.0px;top:1174.0px;width:21.0px;height:8.0px;background:#252525;"></div>
<div style="left:288.0px;top:1185.6px;width:21.0px;height:8.0px;background:#252525;"></div>
<div style="left:288.0px;top:1197.1px;width:21.0px;height:8.0px;background:#252525;"></div>
<div style="left:288.0px;top:1208.6px;width:21.0px;height:8.0px;background:#252525;"></div>
<div style="left:288.0px;top:1220.2px;width:21.0px;height:8.0px;background:#252525;"></div>
<div style="left:288.0px;top:1231.7px;width:21.0px;height:8.0px;background:#252525;"></div>
<div style="left:288.0px;top:1243.3px;width:21.0px;height:8.0px;background:#252525;"></div>
<div style="left:288.0px;top:1254.8px;width:21.0px;height:8.0px;background:#252525;"></div>
<div style="left:288.0px;top:1266.3px;width:21.0px;height:8.0px;background:#252525;"></div>
<div style="left:288.0px;top:1277.9px;width:21.0px;height:8.0px;background:#252525;"></div>
<div style="left:288.0px;top:1289.4px;width:21.0px;height:15.0px;background:#252525;"></div>
<div style="left:286.18px;top:1326.98px;font:700 16.0px/16.0px 'Liberation Sans', sans-serif;color:#e4e4e4;letter-spacing:-0.200px;white-space:pre;transform:rotate(-90deg) scaleX(0.9298);transform-origin:12.03px 7.82px;-webkit-text-stroke:.4px #e4e4e4;">GR</div>
<div style="left:326.2px;top:1060.2px;width:67.6px;height:67.6px;background:#2d2d2d;border-radius:50%;box-shadow:2px 4px 9px rgba(0,0,0,.38);"></div>
<svg style="left:322.2px;top:1056.2px" width="75.6" height="75.6" viewBox="0 0 75.60 75.60"><circle cx="37.80" cy="37.80" r="27.92" fill="#1b1b1b" stroke="#161616" stroke-width="1"/><circle cx="37.80" cy="37.80" r="23.59" fill="#2d2d2d"/><path d="M16.19 16.19A30.56 30.56 0 1 1 16.19 59.41" fill="none" stroke="#7fffd4" stroke-width="6.62" stroke-linecap="round"/><line x1="37.80" y1="37.80" x2="54.49" y2="54.49" stroke="#7fffd4" stroke-width="3.9" stroke-linecap="round"/></svg>
<div style="left:422.3px;top:1060.2px;width:67.6px;height:67.6px;background:#2d2d2d;border-radius:50%;box-shadow:2px 4px 9px rgba(0,0,0,.38);"></div>
<svg style="left:418.3px;top:1056.2px" width="75.6" height="75.6" viewBox="0 0 75.60 75.60"><circle cx="37.80" cy="37.80" r="27.92" fill="#1b1b1b" stroke="#161616" stroke-width="1"/><circle cx="37.80" cy="37.80" r="23.59" fill="#2d2d2d"/><path d="M16.19 16.19A30.56 30.56 0 0 1 65.49 50.71" fill="none" stroke="#7fffd4" stroke-width="6.62" stroke-linecap="round"/><line x1="37.80" y1="37.80" x2="47.77" y2="16.41" stroke="#7fffd4" stroke-width="3.9" stroke-linecap="round"/></svg>
<div style="left:518.4px;top:1060.2px;width:67.6px;height:67.6px;background:#2d2d2d;border-radius:50%;box-shadow:2px 4px 9px rgba(0,0,0,.38);"></div>
<svg style="left:514.4px;top:1056.2px" width="75.6" height="75.6" viewBox="0 0 75.60 75.60"><circle cx="37.80" cy="37.80" r="27.92" fill="#1b1b1b" stroke="#161616" stroke-width="1"/><circle cx="37.80" cy="37.80" r="23.59" fill="#2d2d2d"/><line x1="37.80" y1="37.80" x2="21.11" y2="54.49" stroke="#7fffd4" stroke-width="3.9" stroke-linecap="round"/></svg>
<div style="left:326.07px;top:1144.20px;font:700 15.2px/15.2px 'Liberation Sans', sans-serif;color:#e4e4e4;letter-spacing:1.220px;white-space:pre;-webkit-text-stroke:0.4px #e4e4e4;">THRESH</div>
<div style="left:422.53px;top:1144.20px;font:700 15.2px/15.2px 'Liberation Sans', sans-serif;color:#e4e4e4;letter-spacing:1.305px;white-space:pre;-webkit-text-stroke:0.4px #e4e4e4;">ATTACK</div>
<div style="left:511.00px;top:1144.20px;font:700 15.2px/15.2px 'Liberation Sans', sans-serif;color:#e4e4e4;letter-spacing:1.796px;white-space:pre;-webkit-text-stroke:0.4px #e4e4e4;">MAKE-UP</div>
<div style="left:319.2px;top:1171.0px;width:81.6px;height:39.6px;background:#242424;border-radius:6px;"></div>
<div style="left:329.74px;top:1181.20px;font:400 21.4px/21.4px 'Liberation Sans', sans-serif;color:#e4e4e4;letter-spacing:0.000px;white-space:pre;-webkit-text-stroke:0.18px #e4e4e4;transform:scaleX(1.0881);transform-origin:0 0;">0.0dB</div>
<div style="left:423.1px;top:1171.0px;width:66.0px;height:39.6px;background:#242424;border-radius:6px;"></div>
<div style="left:433.74px;top:1181.20px;font:400 21.4px/21.4px 'Liberation Sans', sans-serif;color:#e4e4e4;letter-spacing:0.267px;white-space:pre;-webkit-text-stroke:0.18px #e4e4e4;transform:scaleX(1.0900);transform-origin:0 0;">3ms</div>
<div style="left:511.4px;top:1171.0px;width:81.6px;height:39.6px;background:#242424;border-radius:6px;"></div>
<div style="left:521.94px;top:1181.20px;font:400 21.4px/21.4px 'Liberation Sans', sans-serif;color:#e4e4e4;letter-spacing:0.000px;white-space:pre;-webkit-text-stroke:0.18px #e4e4e4;transform:scaleX(1.0881);transform-origin:0 0;">0.0dB</div>
<div style="left:326.2px;top:1216.2px;width:67.6px;height:67.6px;background:#2d2d2d;border-radius:50%;box-shadow:2px 4px 9px rgba(0,0,0,.38);"></div>
<svg style="left:322.2px;top:1212.2px" width="75.6" height="75.6" viewBox="0 0 75.60 75.60"><circle cx="37.80" cy="37.80" r="27.92" fill="#1b1b1b" stroke="#161616" stroke-width="1"/><circle cx="37.80" cy="37.80" r="23.59" fill="#2d2d2d"/><line x1="37.80" y1="37.80" x2="21.11" y2="54.49" stroke="#7fffd4" stroke-width="3.9" stroke-linecap="round"/></svg>
<div style="left:422.3px;top:1216.2px;width:67.6px;height:67.6px;background:#2d2d2d;border-radius:50%;box-shadow:2px 4px 9px rgba(0,0,0,.38);"></div>
<svg style="left:418.3px;top:1212.2px" width="75.6" height="75.6" viewBox="0 0 75.60 75.60"><circle cx="37.80" cy="37.80" r="27.92" fill="#1b1b1b" stroke="#161616" stroke-width="1"/><circle cx="37.80" cy="37.80" r="23.59" fill="#2d2d2d"/><path d="M16.19 16.19A30.56 30.56 0 1 1 16.19 59.41" fill="none" stroke="#7fffd4" stroke-width="6.62" stroke-linecap="round"/><line x1="37.80" y1="37.80" x2="54.49" y2="54.49" stroke="#7fffd4" stroke-width="3.9" stroke-linecap="round"/></svg>
<div style="left:333.80px;top:1299.90px;font:700 15.2px/15.2px 'Liberation Sans', sans-serif;color:#e4e4e4;letter-spacing:1.412px;white-space:pre;-webkit-text-stroke:0.4px #e4e4e4;">RATIO</div>
<div style="left:417.90px;top:1299.90px;font:700 15.2px/15.2px 'Liberation Sans', sans-serif;color:#e4e4e4;letter-spacing:0.650px;white-space:pre;-webkit-text-stroke:0.4px #e4e4e4;">RELEASE</div>
<div style="left:326.0px;top:1327.2px;width:68.0px;height:39.6px;background:#242424;border-radius:6px;"></div>
<div style="left:335.66px;top:1337.40px;font:400 21.4px/21.4px 'Liberation Sans', sans-serif;color:#e4e4e4;letter-spacing:0.136px;white-space:pre;-webkit-text-stroke:0.18px #e4e4e4;">1.5:1</div>
<div style="left:411.3px;top:1327.2px;width:89.6px;height:39.6px;background:#242424;border-radius:6px;"></div>
<div style="left:420.72px;top:1337.40px;font:400 21.4px/21.4px 'Liberation Sans', sans-serif;color:#e4e4e4;letter-spacing:-0.000px;white-space:pre;-webkit-text-stroke:0.18px #e4e4e4;transform:scaleX(1.0886);transform-origin:0 0;">100ms</div>
<div style="left:628.0px;top:1003.0px;width:344.4px;height:377.5px;background:#1c1c1c;border-radius:11px;"></div>
<div style="left:765.65px;top:1020.90px;font:700 17.0px/17.0px 'Liberation Sans', sans-serif;color:#e4e4e4;letter-spacing:0.135px;white-space:pre;-webkit-text-stroke:0.4px #e4e4e4;">COMP B</div>
<div style="left:646.2px;top:1081.7px;width:21.0px;height:8.0px;background:#252525;"></div>
<div style="left:646.2px;top:1093.2px;width:21.0px;height:8.0px;background:#252525;"></div>
<div style="left:646.2px;top:1104.8px;width:21.0px;height:8.0px;background:#252525;"></div>
<div style="left:646.2px;top:1116.3px;width:21.0px;height:8.0px;background:#252525;"></div>
<div style="left:646.2px;top:1127.9px;width:21.0px;height:8.0px;background:#252525;"></div>
<div style="left:646.2px;top:1139.4px;width:21.0px;height:8.0px;background:#252525;"></div>
<div style="left:646.2px;top:1150.9px;width:21.0px;height:8.0px;background:#252525;"></div>
<div style="left:646.2px;top:1162.5px;width:21.0px;height:8.0px;background:#252525;"></div>
<div style="left:646.2px;top:1174.0px;width:21.0px;height:8.0px;background:#252525;"></div>
<div style="left:646.2px;top:1185.6px;width:21.0px;height:8.0px;background:#252525;"></div>
<div style="left:646.2px;top:1197.1px;width:21.0px;height:8.0px;background:#252525;"></div>
<div style="left:646.2px;top:1208.6px;width:21.0px;height:8.0px;background:#252525;"></div>
<div style="left:646.2px;top:1220.2px;width:21.0px;height:8.0px;background:#252525;"></div>
<div style="left:646.2px;top:1231.7px;width:21.0px;height:8.0px;background:#252525;"></div>
<div style="left:646.2px;top:1243.3px;width:21.0px;height:8.0px;background:#252525;"></div>
<div style="left:646.2px;top:1254.8px;width:21.0px;height:8.0px;background:#252525;"></div>
<div style="left:646.2px;top:1266.3px;width:21.0px;height:8.0px;background:#252525;"></div>
<div style="left:646.2px;top:1277.9px;width:21.0px;height:8.0px;background:#252525;"></div>
<div style="left:646.2px;top:1289.4px;width:21.0px;height:15.0px;background:#252525;"></div>
<div style="left:644.38px;top:1326.98px;font:700 16.0px/16.0px 'Liberation Sans', sans-serif;color:#e4e4e4;letter-spacing:-0.200px;white-space:pre;transform:rotate(-90deg) scaleX(0.9298);transform-origin:12.03px 7.82px;-webkit-text-stroke:.4px #e4e4e4;">GR</div>
<div style="left:684.4px;top:1060.2px;width:67.6px;height:67.6px;background:#2d2d2d;border-radius:50%;box-shadow:2px 4px 9px rgba(0,0,0,.38);"></div>
<svg style="left:680.4px;top:1056.2px" width="75.6" height="75.6" viewBox="0 0 75.60 75.60"><circle cx="37.80" cy="37.80" r="27.92" fill="#1b1b1b" stroke="#161616" stroke-width="1"/><circle cx="37.80" cy="37.80" r="23.59" fill="#2d2d2d"/><path d="M16.19 16.19A30.56 30.56 0 1 1 16.19 59.41" fill="none" stroke="#7fffd4" stroke-width="6.62" stroke-linecap="round"/><line x1="37.80" y1="37.80" x2="54.49" y2="54.49" stroke="#7fffd4" stroke-width="3.9" stroke-linecap="round"/></svg>
<div style="left:780.5px;top:1060.2px;width:67.6px;height:67.6px;background:#2d2d2d;border-radius:50%;box-shadow:2px 4px 9px rgba(0,0,0,.38);"></div>
<svg style="left:776.5px;top:1056.2px" width="75.6" height="75.6" viewBox="0 0 75.60 75.60"><circle cx="37.80" cy="37.80" r="27.92" fill="#1b1b1b" stroke="#161616" stroke-width="1"/><circle cx="37.80" cy="37.80" r="23.59" fill="#2d2d2d"/><path d="M16.19 16.19A30.56 30.56 0 1 1 16.19 59.41" fill="none" stroke="#7fffd4" stroke-width="6.62" stroke-linecap="round"/><line x1="37.80" y1="37.80" x2="54.49" y2="54.49" stroke="#7fffd4" stroke-width="3.9" stroke-linecap="round"/></svg>
<div style="left:876.6px;top:1060.2px;width:67.6px;height:67.6px;background:#2d2d2d;border-radius:50%;box-shadow:2px 4px 9px rgba(0,0,0,.38);"></div>
<svg style="left:872.6px;top:1056.2px" width="75.6" height="75.6" viewBox="0 0 75.60 75.60"><circle cx="37.80" cy="37.80" r="27.92" fill="#1b1b1b" stroke="#161616" stroke-width="1"/><circle cx="37.80" cy="37.80" r="23.59" fill="#2d2d2d"/><line x1="37.80" y1="37.80" x2="21.11" y2="54.49" stroke="#7fffd4" stroke-width="3.9" stroke-linecap="round"/></svg>
<div style="left:684.28px;top:1144.20px;font:700 15.2px/15.2px 'Liberation Sans', sans-serif;color:#e4e4e4;letter-spacing:1.220px;white-space:pre;-webkit-text-stroke:0.4px #e4e4e4;">THRESH</div>
<div style="left:780.73px;top:1144.20px;font:700 15.2px/15.2px 'Liberation Sans', sans-serif;color:#e4e4e4;letter-spacing:1.305px;white-space:pre;-webkit-text-stroke:0.4px #e4e4e4;">ATTACK</div>
<div style="left:869.20px;top:1144.20px;font:700 15.2px/15.2px 'Liberation Sans', sans-serif;color:#e4e4e4;letter-spacing:1.796px;white-space:pre;-webkit-text-stroke:0.4px #e4e4e4;">MAKE-UP</div>
<div style="left:677.4px;top:1171.0px;width:81.6px;height:39.6px;background:#242424;border-radius:6px;"></div>
<div style="left:687.94px;top:1181.20px;font:400 21.4px/21.4px 'Liberation Sans', sans-serif;color:#e4e4e4;letter-spacing:0.000px;white-space:pre;-webkit-text-stroke:0.18px #e4e4e4;transform:scaleX(1.0881);transform-origin:0 0;">0.0dB</div>
<div style="left:774.7px;top:1171.0px;width:79.2px;height:39.6px;background:#242424;border-radius:6px;"></div>
<div style="left:784.94px;top:1181.20px;font:400 21.4px/21.4px 'Liberation Sans', sans-serif;color:#e4e4e4;letter-spacing:0.501px;white-space:pre;-webkit-text-stroke:0.18px #e4e4e4;transform:scaleX(1.0900);transform-origin:0 0;">30ms</div>
<div style="left:869.6px;top:1171.0px;width:81.6px;height:39.6px;background:#242424;border-radius:6px;"></div>
<div style="left:880.14px;top:1181.20px;font:400 21.4px/21.4px 'Liberation Sans', sans-serif;color:#e4e4e4;letter-spacing:0.000px;white-space:pre;-webkit-text-stroke:0.18px #e4e4e4;transform:scaleX(1.0881);transform-origin:0 0;">0.0dB</div>
<div style="left:684.4px;top:1216.2px;width:67.6px;height:67.6px;background:#2d2d2d;border-radius:50%;box-shadow:2px 4px 9px rgba(0,0,0,.38);"></div>
<svg style="left:680.4px;top:1212.2px" width="75.6" height="75.6" viewBox="0 0 75.60 75.60"><circle cx="37.80" cy="37.80" r="27.92" fill="#1b1b1b" stroke="#161616" stroke-width="1"/><circle cx="37.80" cy="37.80" r="23.59" fill="#2d2d2d"/><line x1="37.80" y1="37.80" x2="21.11" y2="54.49" stroke="#7fffd4" stroke-width="3.9" stroke-linecap="round"/></svg>
<div style="left:780.5px;top:1216.2px;width:67.6px;height:67.6px;background:#2d2d2d;border-radius:50%;box-shadow:2px 4px 9px rgba(0,0,0,.38);"></div>
<svg style="left:776.5px;top:1212.2px" width="75.6" height="75.6" viewBox="0 0 75.60 75.60"><circle cx="37.80" cy="37.80" r="27.92" fill="#1b1b1b" stroke="#161616" stroke-width="1"/><circle cx="37.80" cy="37.80" r="23.59" fill="#2d2d2d"/><path d="M16.19 16.19A30.56 30.56 0 1 1 16.19 59.41" fill="none" stroke="#7fffd4" stroke-width="6.62" stroke-linecap="round"/><line x1="37.80" y1="37.80" x2="54.49" y2="54.49" stroke="#7fffd4" stroke-width="3.9" stroke-linecap="round"/></svg>
<div style="left:692.00px;top:1299.90px;font:700 15.2px/15.2px 'Liberation Sans', sans-serif;color:#e4e4e4;letter-spacing:1.412px;white-space:pre;-webkit-text-stroke:0.4px #e4e4e4;">RATIO</div>
<div style="left:776.10px;top:1299.90px;font:700 15.2px/15.2px 'Liberation Sans', sans-serif;color:#e4e4e4;letter-spacing:0.650px;white-space:pre;-webkit-text-stroke:0.4px #e4e4e4;">RELEASE</div>
<div style="left:684.2px;top:1327.2px;width:68.0px;height:39.6px;background:#242424;border-radius:6px;"></div>
<div style="left:693.87px;top:1337.40px;font:400 21.4px/21.4px 'Liberation Sans', sans-serif;color:#e4e4e4;letter-spacing:0.136px;white-space:pre;-webkit-text-stroke:0.18px #e4e4e4;">1.5:1</div>
<div style="left:769.5px;top:1327.2px;width:89.6px;height:39.6px;background:#242424;border-radius:6px;"></div>
<div style="left:778.92px;top:1337.40px;font:400 21.4px/21.4px 'Liberation Sans', sans-serif;color:#e4e4e4;letter-spacing:0.000px;white-space:pre;-webkit-text-stroke:0.18px #e4e4e4;transform:scaleX(1.0886);transform-origin:0 0;">100ms</div>
<div style="left:1004.0px;top:769.2px;width:276.2px;height:626.0px;background:#2d2d2d;border-radius:9px;"></div>
<div style="left:1092.10px;top:788.50px;font:700 21.8px/21.8px 'Liberation Sans', sans-serif;color:#e4e4e4;letter-spacing:1.833px;white-space:pre;text-shadow:1px 2px 3px rgba(0,0,0,.55);-webkit-text-stroke:0.4px #e4e4e4;">LIMITER</div>
<div style="left:1044.0px;top:945.0px;width:27.8px;height:279.3px;background:#1c1c1c;border-radius:7px;"></div>
<div style="left:1046.8px;top:952.0px;width:21.5px;height:8.0px;background:#252525;"></div>
<div style="left:1046.8px;top:963.5px;width:21.5px;height:8.0px;background:#252525;"></div>
<div style="left:1046.8px;top:975.0px;width:21.5px;height:8.0px;background:#252525;"></div>
<div style="left:1046.8px;top:986.5px;width:21.5px;height:8.0px;background:#252525;"></div>
<div style="left:1046.8px;top:998.0px;width:21.5px;height:8.0px;background:#252525;"></div>
<div style="left:1046.8px;top:1009.5px;width:21.5px;height:8.0px;background:#252525;"></div>
<div style="left:1046.8px;top:1020.9px;width:21.5px;height:8.0px;background:#252525;"></div>
<div style="left:1046.8px;top:1032.4px;width:21.5px;height:8.0px;background:#252525;"></div>
<div style="left:1046.8px;top:1043.9px;width:21.5px;height:8.0px;background:#252525;"></div>
<div style="left:1046.8px;top:1055.4px;width:21.5px;height:8.0px;background:#252525;"></div>
<div style="left:1046.8px;top:1066.9px;width:21.5px;height:8.0px;background:#252525;"></div>
<div style="left:1046.8px;top:1078.4px;width:21.5px;height:8.0px;background:#252525;"></div>
<div style="left:1046.8px;top:1089.9px;width:21.5px;height:8.0px;background:#252525;"></div>
<div style="left:1046.8px;top:1101.4px;width:21.5px;height:8.0px;background:#252525;"></div>
<div style="left:1046.8px;top:1112.9px;width:21.5px;height:8.0px;background:#252525;"></div>
<div style="left:1046.8px;top:1124.3px;width:21.5px;height:8.0px;background:#252525;"></div>
<div style="left:1046.8px;top:1135.8px;width:21.5px;height:8.0px;background:#252525;"></div>
<div style="left:1046.8px;top:1147.3px;width:21.5px;height:8.0px;background:#252525;"></div>
<div style="left:1046.8px;top:1158.8px;width:21.5px;height:8.0px;background:#252525;"></div>
<div style="left:1046.8px;top:1170.3px;width:21.5px;height:8.0px;background:#252525;"></div>
<div style="left:1046.8px;top:1181.8px;width:21.5px;height:8.0px;background:#252525;"></div>
<div style="left:1046.8px;top:1193.3px;width:21.5px;height:8.0px;background:#252525;"></div>
<div style="left:1046.8px;top:1204.8px;width:21.5px;height:16.6px;background:#252525;"></div>
<div style="left:1043.94px;top:1242.85px;font:700 18.5px/18.5px 'Liberation Sans', sans-serif;color:#e4e4e4;letter-spacing:-0.200px;white-space:pre;transform:rotate(-90deg) scaleX(0.9234);transform-origin:13.96px 9.05px;-webkit-text-stroke:.4px #e4e4e4;">GR</div>
<div style="left:1160.4px;top:891.7px;width:62.4px;height:62.4px;background:#2d2d2d;border-radius:50%;box-shadow:2px 4px 9px rgba(0,0,0,.38);"></div>
<svg style="left:1156.4px;top:887.7px" width="70.4" height="70.4" viewBox="0 0 70.40 70.40"><circle cx="35.20" cy="35.20" r="25.77" fill="#1b1b1b" stroke="#161616" stroke-width="1"/><circle cx="35.20" cy="35.20" r="21.78" fill="#2d2d2d"/><path d="M15.26 15.26A28.20 28.20 0 1 1 15.26 55.14" fill="none" stroke="#7fffd4" stroke-width="6.12" stroke-linecap="round"/><line x1="35.20" y1="35.20" x2="50.50" y2="50.50" stroke="#7fffd4" stroke-width="3.9" stroke-linecap="round"/></svg>
<div style="left:1150.45px;top:970.40px;font:700 21.0px/21.0px 'Liberation Sans', sans-serif;color:#e4e4e4;letter-spacing:-0.200px;white-space:pre;-webkit-text-stroke:0.4px #e4e4e4;">THRESH</div>
<div style="left:1161.55px;top:1012.50px;font:400 22px/22px 'Liberation Sans', sans-serif;color:#e4e4e4;letter-spacing:-0.000px;white-space:pre;-webkit-text-stroke:0.18px #e4e4e4;transform:scaleX(1.0778);transform-origin:0 0;">0.0dB</div>
<div style="left:1160.4px;top:1076.1px;width:62.4px;height:62.4px;background:#2d2d2d;border-radius:50%;box-shadow:2px 4px 9px rgba(0,0,0,.38);"></div>
<svg style="left:1156.4px;top:1072.1px" width="70.4" height="70.4" viewBox="0 0 70.40 70.40"><circle cx="35.20" cy="35.20" r="25.77" fill="#1b1b1b" stroke="#161616" stroke-width="1"/><circle cx="35.20" cy="35.20" r="21.78" fill="#2d2d2d"/><path d="M15.26 15.26A28.20 28.20 0 0 1 25.09 8.87" fill="none" stroke="#7fffd4" stroke-width="6.12" stroke-linecap="round"/><line x1="35.20" y1="35.20" x2="15.00" y2="42.95" stroke="#7fffd4" stroke-width="3.9" stroke-linecap="round"/></svg>
<div style="left:1145.70px;top:1154.30px;font:700 21.0px/21.0px 'Liberation Sans', sans-serif;color:#e4e4e4;letter-spacing:-0.200px;white-space:pre;-webkit-text-stroke:0.4px #e4e4e4;transform:scaleX(0.9478);transform-origin:0 0;">RELEASE</div>
<div style="left:1163.14px;top:1196.00px;font:400 22px/22px 'Liberation Sans', sans-serif;color:#e4e4e4;letter-spacing:0.062px;white-space:pre;-webkit-text-stroke:0.18px #e4e4e4;transform:scaleX(1.0900);transform-origin:0 0;">50ms</div>
<div style="left:1168.0px;top:1254.9px;width:49.3px;height:35.2px;background:#2d2d2d;border-radius:5px;border:2.5px solid #1a1a1a;box-sizing:border-box;"></div>
<div style="left:1157.95px;top:1301.65px;font:700 18.5px/18.5px 'Liberation Sans', sans-serif;color:#e4e4e4;letter-spacing:0.837px;white-space:pre;-webkit-text-stroke:0.4px #e4e4e4;">PUNCH</div>
<div style="left:1298.0px;top:769.2px;width:600.0px;height:626.0px;background:#2d2d2d;border-radius:9px;"></div>
<div style="left:1477.80px;top:788.50px;font:700 21.8px/21.8px 'Liberation Sans', sans-serif;color:#e4e4e4;letter-spacing:1.942px;white-space:pre;text-shadow:1px 2px 3px rgba(0,0,0,.55);-webkit-text-stroke:0.4px #e4e4e4;">MASTER OUTPUT</div>
<div style="left:1361.3px;top:933.3px;width:62.4px;height:62.4px;background:#2d2d2d;border-radius:50%;box-shadow:2px 4px 9px rgba(0,0,0,.38);"></div>
<svg style="left:1357.3px;top:929.3px" width="70.4" height="70.4" viewBox="0 0 70.40 70.40"><circle cx="35.20" cy="35.20" r="25.77" fill="#1b1b1b" stroke="#161616" stroke-width="1"/><circle cx="35.20" cy="35.20" r="21.78" fill="#2d2d2d"/><path d="M15.26 15.26A28.20 28.20 0 1 1 54.79 55.49" fill="none" stroke="#7fffd4" stroke-width="6.12" stroke-linecap="round"/><line x1="35.20" y1="35.20" x2="50.74" y2="20.14" stroke="#7fffd4" stroke-width="3.9" stroke-linecap="round"/></svg>
<div style="left:1366.12px;top:1011.40px;font:700 21.0px/21.0px 'Liberation Sans', sans-serif;color:#e4e4e4;letter-spacing:-0.083px;white-space:pre;-webkit-text-stroke:0.4px #e4e4e4;">GAIN</div>
<div style="left:1361.15px;top:1053.30px;font:400 22px/22px 'Liberation Sans', sans-serif;color:#e4e4e4;letter-spacing:-0.000px;white-space:pre;-webkit-text-stroke:0.18px #e4e4e4;transform:scaleX(1.0778);transform-origin:0 0;">0.0dB</div>
<div style="left:1361.3px;top:1131.3px;width:62.4px;height:62.4px;background:#2d2d2d;border-radius:50%;box-shadow:2px 4px 9px rgba(0,0,0,.38);"></div>
<svg style="left:1357.3px;top:1127.3px" width="70.4" height="70.4" viewBox="0 0 70.40 70.40"><circle cx="35.20" cy="35.20" r="25.77" fill="#1b1b1b" stroke="#161616" stroke-width="1"/><circle cx="35.20" cy="35.20" r="21.78" fill="#2d2d2d"/><path d="M15.26 15.26A28.20 28.20 0 0 1 63.40 35.20" fill="none" stroke="#7fffd4" stroke-width="6.12" stroke-linecap="round"/><line x1="35.20" y1="35.20" x2="35.20" y2="13.56" stroke="#7fffd4" stroke-width="3.9" stroke-linecap="round"/></svg>
<div style="left:1357.40px;top:1209.40px;font:700 21.0px/21.0px 'Liberation Sans', sans-serif;color:#e4e4e4;letter-spacing:0.406px;white-space:pre;-webkit-text-stroke:0.4px #e4e4e4;">WIDTH</div>
<div style="left:1360.95px;top:1252.20px;font:400 22px/22px 'Liberation Sans', sans-serif;color:#e4e4e4;letter-spacing:0.000px;white-space:pre;-webkit-text-stroke:0.18px #e4e4e4;transform:scaleX(1.0732);transform-origin:0 0;">100%</div>
<div style="left:1530.9px;top:886.4px;width:27.8px;height:371.8px;background:#1c1c1c;border-radius:7px;"></div>
<div style="left:1534.0px;top:893.5px;width:21.3px;height:8.0px;background:#252525;"></div>
<div style="left:1534.0px;top:905.0px;width:21.3px;height:8.0px;background:#252525;"></div>
<div style="left:1534.0px;top:916.5px;width:21.3px;height:8.0px;background:#252525;"></div>
<div style="left:1534.0px;top:928.1px;width:21.3px;height:8.0px;background:#252525;"></div>
<div style="left:1534.0px;top:939.6px;width:21.3px;height:8.0px;background:#252525;"></div>
<div style="left:1534.0px;top:951.1px;width:21.3px;height:8.0px;background:#252525;"></div>
<div style="left:1534.0px;top:962.6px;width:21.3px;height:8.0px;background:#252525;"></div>
<div style="left:1534.0px;top:974.1px;width:21.3px;height:8.0px;background:#252525;"></div>
<div style="left:1534.0px;top:985.7px;width:21.3px;height:8.0px;background:#252525;"></div>
<div style="left:1534.0px;top:997.2px;width:21.3px;height:8.0px;background:#252525;"></div>
<div style="left:1534.0px;top:1008.7px;width:21.3px;height:8.0px;background:#252525;"></div>
<div style="left:1534.0px;top:1020.2px;width:21.3px;height:8.0px;background:#252525;"></div>
<div style="left:1534.0px;top:1031.7px;width:21.3px;height:8.0px;background:#252525;"></div>
<div style="left:1534.0px;top:1043.3px;width:21.3px;height:8.0px;background:#252525;"></div>
<div style="left:1534.0px;top:1054.8px;width:21.3px;height:8.0px;background:#252525;"></div>
<div style="left:1534.0px;top:1066.3px;width:21.3px;height:8.0px;background:#252525;"></div>
<div style="left:1534.0px;top:1077.8px;width:21.3px;height:8.0px;background:#252525;"></div>
<div style="left:1534.0px;top:1089.3px;width:21.3px;height:8.0px;background:#252525;"></div>
<div style="left:1534.0px;top:1100.9px;width:21.3px;height:8.0px;background:#252525;"></div>
<div style="left:1534.0px;top:1112.4px;width:21.3px;height:8.0px;background:#252525;"></div>
<div style="left:1534.0px;top:1123.9px;width:21.3px;height:8.0px;background:#252525;"></div>
<div style="left:1534.0px;top:1135.4px;width:21.3px;height:8.0px;background:#252525;"></div>
<div style="left:1534.0px;top:1146.9px;width:21.3px;height:8.0px;background:#252525;"></div>
<div style="left:1534.0px;top:1158.5px;width:21.3px;height:8.0px;background:rgba(127,255,212,0.05);box-shadow:0 0 6px rgba(127,255,212,0.26);"></div>
<div style="left:1534.0px;top:1170.0px;width:21.3px;height:8.0px;background:rgba(127,255,212,0.09);box-shadow:0 0 6px rgba(127,255,212,0.33999999999999997);"></div>
<div style="left:1534.0px;top:1181.5px;width:21.3px;height:8.0px;background:#7fffd4;box-shadow:0 0 7px rgba(127,255,212,.55);"></div>
<div style="left:1534.0px;top:1193.0px;width:21.3px;height:8.0px;background:#7fffd4;box-shadow:0 0 7px rgba(127,255,212,.55);"></div>
<div style="left:1534.0px;top:1204.5px;width:21.3px;height:8.0px;background:#7fffd4;box-shadow:0 0 7px rgba(127,255,212,.55);"></div>
<div style="left:1534.0px;top:1216.1px;width:21.3px;height:8.0px;background:#7fffd4;box-shadow:0 0 7px rgba(127,255,212,.55);"></div>
<div style="left:1534.0px;top:1227.6px;width:21.3px;height:8.0px;background:#7fffd4;box-shadow:0 0 7px rgba(127,255,212,.55);"></div>
<div style="left:1534.0px;top:1239.1px;width:21.3px;height:15.8px;background:#7fffd4;box-shadow:0 0 7px rgba(127,255,212,.55);"></div>
<div style="left:1566.1px;top:886.4px;width:27.8px;height:371.8px;background:#1c1c1c;border-radius:7px;"></div>
<div style="left:1569.2px;top:893.5px;width:21.3px;height:8.0px;background:#252525;"></div>
<div style="left:1569.2px;top:905.0px;width:21.3px;height:8.0px;background:#252525;"></div>
<div style="left:1569.2px;top:916.5px;width:21.3px;height:8.0px;background:#252525;"></div>
<div style="left:1569.2px;top:928.1px;width:21.3px;height:8.0px;background:#252525;"></div>
<div style="left:1569.2px;top:939.6px;width:21.3px;height:8.0px;background:#252525;"></div>
<div style="left:1569.2px;top:951.1px;width:21.3px;height:8.0px;background:#252525;"></div>
<div style="left:1569.2px;top:962.6px;width:21.3px;height:8.0px;background:#252525;"></div>
<div style="left:1569.2px;top:974.1px;width:21.3px;height:8.0px;background:#252525;"></div>
<div style="left:1569.2px;top:985.7px;width:21.3px;height:8.0px;background:#252525;"></div>
<div style="left:1569.2px;top:997.2px;width:21.3px;height:8.0px;background:#252525;"></div>
<div style="left:1569.2px;top:1008.7px;width:21.3px;height:8.0px;background:#252525;"></div>
<div style="left:1569.2px;top:1020.2px;width:21.3px;height:8.0px;background:#252525;"></div>
<div style="left:1569.2px;top:1031.7px;width:21.3px;height:8.0px;background:#252525;"></div>
<div style="left:1569.2px;top:1043.3px;width:21.3px;height:8.0px;background:#252525;"></div>
<div style="left:1569.2px;top:1054.8px;width:21.3px;height:8.0px;background:#252525;"></div>
<div style="left:1569.2px;top:1066.3px;width:21.3px;height:8.0px;background:#252525;"></div>
<div style="left:1569.2px;top:1077.8px;width:21.3px;height:8.0px;background:#252525;"></div>
<div style="left:1569.2px;top:1089.3px;width:21.3px;height:8.0px;background:#252525;"></div>
<div style="left:1569.2px;top:1100.9px;width:21.3px;height:8.0px;background:#252525;"></div>
<div style="left:1569.2px;top:1112.4px;width:21.3px;height:8.0px;background:#252525;"></div>
<div style="left:1569.2px;top:1123.9px;width:21.3px;height:8.0px;background:#252525;"></div>
<div style="left:1569.2px;top:1135.4px;width:21.3px;height:8.0px;background:#252525;"></div>
<div style="left:1569.2px;top:1146.9px;width:21.3px;height:8.0px;background:#252525;"></div>
<div style="left:1569.2px;top:1158.5px;width:21.3px;height:8.0px;background:rgba(127,255,212,0.05);box-shadow:0 0 6px rgba(127,255,212,0.26);"></div>
<div style="left:1569.2px;top:1170.0px;width:21.3px;height:8.0px;background:rgba(127,255,212,0.05);box-shadow:0 0 6px rgba(127,255,212,0.26);"></div>
<div style="left:1569.2px;top:1181.5px;width:21.3px;height:8.0px;background:rgba(127,255,212,0.09);box-shadow:0 0 6px rgba(127,255,212,0.33999999999999997);"></div>
<div style="left:1569.2px;top:1193.0px;width:21.3px;height:8.0px;background:#7fffd4;box-shadow:0 0 7px rgba(127,255,212,.55);"></div>
<div style="left:1569.2px;top:1204.5px;width:21.3px;height:8.0px;background:#7fffd4;box-shadow:0 0 7px rgba(127,255,212,.55);"></div>
<div style="left:1569.2px;top:1216.1px;width:21.3px;height:8.0px;background:#7fffd4;box-shadow:0 0 7px rgba(127,255,212,.55);"></div>
<div style="left:1569.2px;top:1227.6px;width:21.3px;height:8.0px;background:#7fffd4;box-shadow:0 0 7px rgba(127,255,212,.55);"></div>
<div style="left:1569.2px;top:1239.1px;width:21.3px;height:15.8px;background:#7fffd4;box-shadow:0 0 7px rgba(127,255,212,.55);"></div>
<div style="left:1569.2px;top:1182.1px;width:21.3px;height:7.8px;background:rgba(127,255,212,.62);box-shadow:0 0 6px rgba(127,255,212,.35);"></div>
<div style="left:1536.81px;top:1289.05px;font:700 18.5px/18.5px 'Liberation Sans', sans-serif;color:#e4e4e4;letter-spacing:-0.200px;white-space:pre;transform:rotate(-90deg) scaleX(0.9863);transform-origin:25.89px 9.05px;-webkit-text-stroke:.4px #e4e4e4;">PEAK</div>
<div style="left:1685.1px;top:929.1px;width:139.6px;height:80.9px;background:#1c1c1c;border-radius:10px;"></div>
<div style="left:1715.43px;top:941.75px;font:400 17.5px/17.5px 'Liberation Sans', sans-serif;color:#e4e4e4;letter-spacing:0.000px;white-space:pre;-webkit-text-stroke:0.18px #e4e4e4;transform:scaleX(1.0622);transform-origin:0 0;">PEAK dB</div>
<div style="left:1714.65px;top:967.45px;font:700 32.5px/32.5px 'Liberation Sans', sans-serif;color:#e4e4e4;letter-spacing:1.344px;white-space:pre;-webkit-text-stroke:0.4px #e4e4e4;">-10.4</div>
<div style="left:1685.1px;top:1016.9px;width:139.6px;height:79.8px;background:#1c1c1c;border-radius:10px;"></div>
<div style="left:1720.44px;top:1029.55px;font:400 17.5px/17.5px 'Liberation Sans', sans-serif;color:#e4e4e4;letter-spacing:0.000px;white-space:pre;-webkit-text-stroke:0.18px #e4e4e4;transform:scaleX(1.0863);transform-origin:0 0;">S-LUFS</div>
<div style="left:1714.95px;top:1055.25px;font:700 32.5px/32.5px 'Liberation Sans', sans-serif;color:#e4e4e4;letter-spacing:1.456px;white-space:pre;-webkit-text-stroke:0.4px #e4e4e4;">-18.8</div>
<div style="left:1685.1px;top:1104.2px;width:139.6px;height:80.4px;background:#1c1c1c;border-radius:10px;"></div>
<div style="left:1721.91px;top:1116.85px;font:400 17.5px/17.5px 'Liberation Sans', sans-serif;color:#e4e4e4;letter-spacing:0.000px;white-space:pre;-webkit-text-stroke:0.18px #e4e4e4;transform:scaleX(1.0739);transform-origin:0 0;">L-LUFS</div>
<div style="left:1715.25px;top:1142.55px;font:700 32.5px/32.5px 'Liberation Sans', sans-serif;color:#e4e4e4;letter-spacing:1.344px;white-space:pre;-webkit-text-stroke:0.4px #e4e4e4;">-31.3</div>
<div style="left:1730.1px;top:1212.7px;width:48.8px;height:34.4px;background:#2d2d2d;border-radius:5px;border:2.5px solid #1a1a1a;box-sizing:border-box;"></div>
<div style="left:1695.65px;top:1259.45px;font:700 18.5px/18.5px 'Liberation Sans', sans-serif;color:#e4e4e4;letter-spacing:0.203px;white-space:pre;-webkit-text-stroke:0.4px #e4e4e4;">BYPASS ALL</div>
</div></body></html>
